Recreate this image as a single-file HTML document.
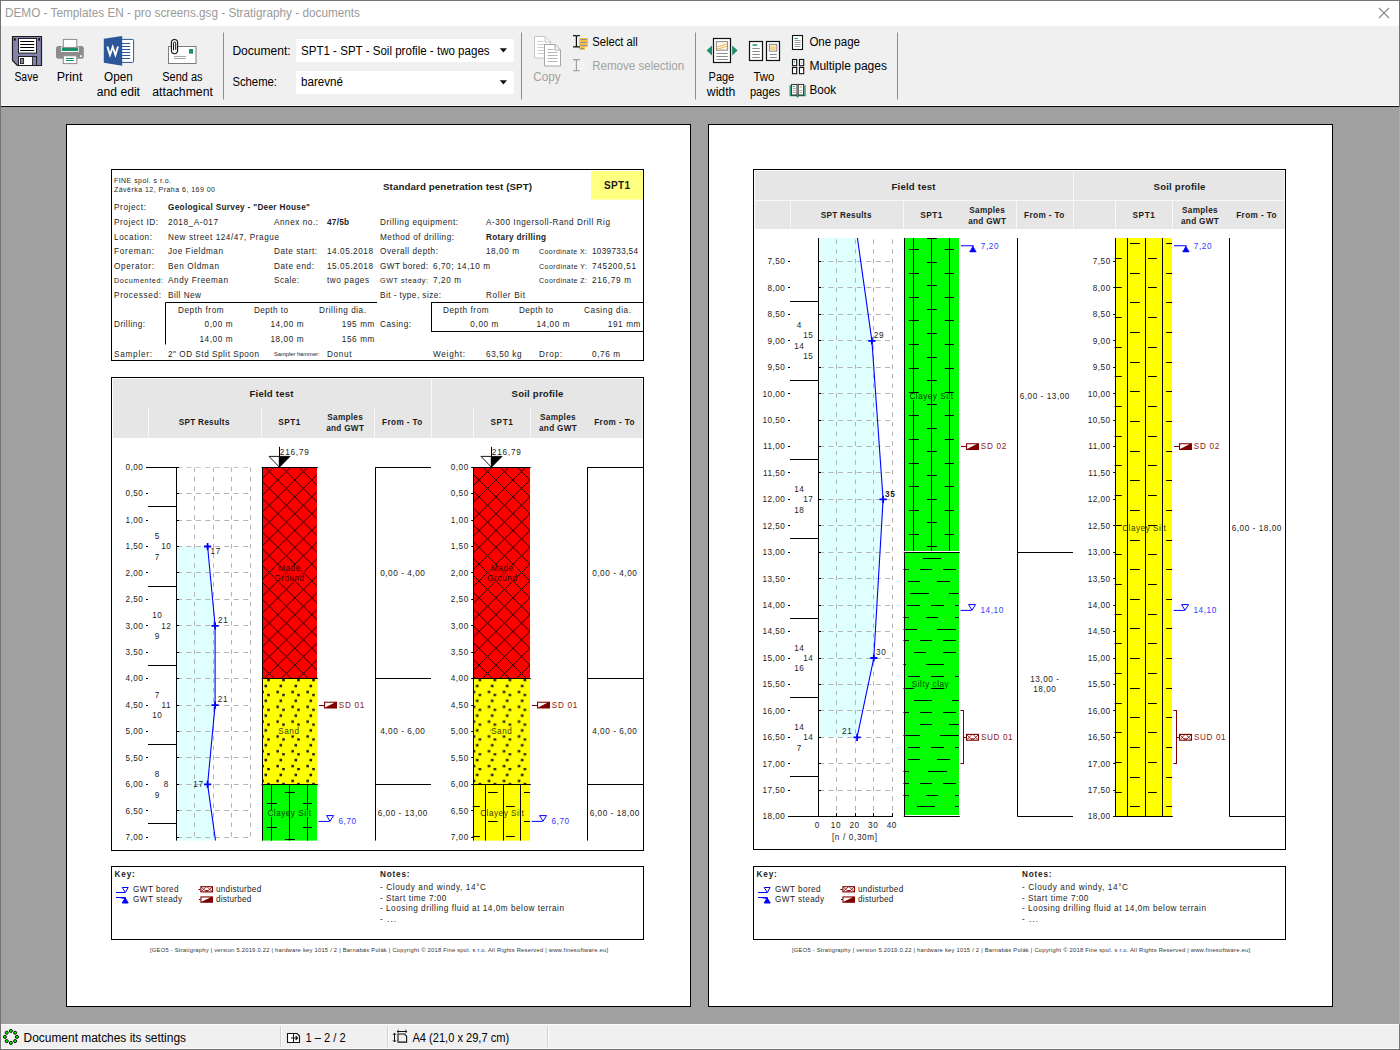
<!DOCTYPE html>
<html lang="en"><head><meta charset="utf-8"><title>DEMO - Templates EN - pro screens.gsg - Stratigraphy - documents</title>
<style>
html,body{margin:0;padding:0;}
body{width:1400px;height:1050px;overflow:hidden;background:#a0a0a0;position:relative;font-family:"Liberation Sans",Arial,sans-serif;}
#win{position:absolute;left:0;top:0;width:1400px;height:1050px;overflow:hidden;}
#titlebar{position:absolute;left:0;top:0;width:1400px;height:26px;background:#fff;}
#toolbar{position:absolute;left:0;top:26px;width:1400px;height:79px;background:#f0f0f0;}
#tbline{position:absolute;left:0;top:105px;width:1400px;height:2px;background:linear-gradient(#fff 0,#fff 1px,#080808 1px,#080808 2px);}
#work{position:absolute;left:0;top:107px;width:1400px;height:917px;background:#a0a0a0;}
#status{position:absolute;left:0;top:1024px;width:1400px;height:26px;background:#f0f0f0;box-shadow:inset 0 1px 0 #fbfbfb, inset 0 -2px 0 #fbfbfb;}
svg{position:absolute;left:0;top:0;display:block;}
svg text{font-family:"Liberation Sans",Arial,sans-serif;}
.frame{position:absolute;pointer-events:none;}

</style></head><body>
<div id="win">
<div id="titlebar"><svg width="1400" height="26" viewBox="0 0 1400 26"><text x="5.0" y="17.2" font-size="12" fill="#9a9a9a" textLength="355" lengthAdjust="spacingAndGlyphs">DEMO - Templates EN - pro screens.gsg - Stratigraphy - documents</text><path d="M1379 8 L1389 18 M1389 8 L1379 18" stroke="#8a8a8a" stroke-width="1.1" fill="none"/></svg></div>
<div id="toolbar"><svg width="1400" height="79" viewBox="0 26 1400 79"><line x1="223.5" y1="32.5" x2="223.5" y2="99.5" stroke="#8c8c8c"/><line x1="521.5" y1="32.5" x2="521.5" y2="99.5" stroke="#8c8c8c"/><line x1="695.5" y1="32.5" x2="695.5" y2="99.5" stroke="#8c8c8c"/><line x1="897.5" y1="32.5" x2="897.5" y2="99.5" stroke="#8c8c8c"/><path d="M12.5 36.5 H41.5 V65.5 H17.5 L12.5 60.5 Z" fill="#8383ad" stroke="#1e1e1e" stroke-width="1.2" stroke-linejoin="round"/><rect x="14.0" y="38.2" width="1.6" height="2.4" fill="#000" stroke="none"/><rect x="38.4" y="38.2" width="1.6" height="2.4" fill="#000" stroke="none"/><rect x="18.5" y="38.5" width="18.0" height="14.6" fill="#fff" stroke="#1e1e1e"/><line x1="20.2" y1="41.5" x2="34.2" y2="41.5" stroke="#000"/><line x1="20.2" y1="44.5" x2="34.2" y2="44.5" stroke="#000"/><line x1="20.2" y1="47.5" x2="34.2" y2="47.5" stroke="#000"/><line x1="20.2" y1="50.5" x2="34.2" y2="50.5" stroke="#000"/><rect x="18.5" y="56.5" width="18.0" height="9.0" fill="#fff" stroke="#1e1e1e"/><rect x="20.4" y="58.4" width="3.2" height="5.2" fill="#8383ad" stroke="#1e1e1e" stroke-width="0.9"/><rect x="32.6" y="56.6" width="4.0" height="9.0" fill="#8383ad" stroke="#1e1e1e" stroke-width="0.9"/><rect x="56" y="46" width="27.8" height="12.8" rx="2.5" fill="#8c8c8c"/><rect x="61.2" y="46.6" width="17.5" height="5.4" fill="#fff" stroke="none"/><rect x="62.0" y="47.4" width="16.0" height="3.6" fill="#1a8f68" stroke="none"/><rect x="63.3" y="39.4" width="13.5" height="8.0" fill="#fff" stroke="#8c8c8c"/><rect x="63.3" y="55.8" width="13.5" height="7.8" fill="#fff" stroke="#8c8c8c"/><line x1="66.0" y1="58.5" x2="73.8" y2="58.5" stroke="#1a8f68"/><line x1="66.0" y1="60.5" x2="73.8" y2="60.5" stroke="#1a8f68"/><rect x="80.1" y="55.2" width="1.8" height="1.8" fill="#fff" stroke="none"/><rect x="120" y="39.4" width="13.6" height="23" rx="1" fill="#fff" stroke="#2b579a" stroke-width="1"/><line x1="122.0" y1="43.5" x2="130.2" y2="43.5" stroke="#2b579a"/><line x1="122.0" y1="46.5" x2="130.2" y2="46.5" stroke="#2b579a"/><line x1="122.0" y1="49.5" x2="130.2" y2="49.5" stroke="#2b579a"/><line x1="122.0" y1="52.5" x2="130.2" y2="52.5" stroke="#2b579a"/><line x1="122.0" y1="55.5" x2="130.2" y2="55.5" stroke="#2b579a"/><line x1="122.0" y1="58.5" x2="130.2" y2="58.5" stroke="#2b579a"/><path d="M103.8 38.8 L122.2 35.9 V65.8 L103.8 62.7 Z" fill="#2b579a"/><path d="M107.4 46.4 L110 55 L112.7 47 L115.4 55 L118 46.4" fill="none" stroke="#fff" stroke-width="1.9" stroke-linejoin="miter"/><rect x="168.5" y="46.5" width="27.5" height="17.0" fill="#fff" stroke="#7d7d7d"/><rect x="189.0" y="49.0" width="4.0" height="4.6" fill="#1a8f68" stroke="none"/><line x1="174.0" y1="56.5" x2="185.8" y2="56.5" stroke="#a8a8a8"/><line x1="174.0" y1="58.5" x2="185.8" y2="58.5" stroke="#a8a8a8"/><path d="M171.4 49.5 V42.6 a3.1 3.1 0 0 1 6.2 0 V50.6 a3.1 3.1 0 0 1 -6.2 0 V49.5" fill="#f4f4f4" stroke="#111" stroke-width="1.1"/><path d="M173.5 50.2 V43.2 a1.1 1.1 0 0 1 2.2 0 V49.8" fill="none" stroke="#111" stroke-width="1"/><text x="26.3" y="80.9" font-size="12" fill="#000" text-anchor="middle" textLength="23.8" lengthAdjust="spacingAndGlyphs">Save</text><text x="69.6" y="80.9" font-size="12" fill="#000" text-anchor="middle" textLength="25.6" lengthAdjust="spacingAndGlyphs">Print</text><text x="118.4" y="80.9" font-size="12" fill="#000" text-anchor="middle" textLength="28.6" lengthAdjust="spacingAndGlyphs">Open</text><text x="118.4" y="96.2" font-size="12" fill="#000" text-anchor="middle" textLength="43.2" lengthAdjust="spacingAndGlyphs">and edit</text><text x="182.4" y="80.9" font-size="12" fill="#000" text-anchor="middle" textLength="40.2" lengthAdjust="spacingAndGlyphs">Send as</text><text x="182.6" y="96.2" font-size="12" fill="#000" text-anchor="middle" textLength="60.6" lengthAdjust="spacingAndGlyphs">attachment</text><text x="232.4" y="54.6" font-size="12" fill="#000" textLength="58.3" lengthAdjust="spacingAndGlyphs">Document:</text><text x="232.4" y="86.2" font-size="12" fill="#000" textLength="44.6" lengthAdjust="spacingAndGlyphs">Scheme:</text><rect x="296.0" y="39.0" width="217.6" height="23.0" fill="#fff" stroke="none"/><rect x="296.0" y="71.0" width="217.6" height="23.0" fill="#fff" stroke="none"/><text x="301.0" y="54.6" font-size="12" fill="#000" textLength="188.6" lengthAdjust="spacingAndGlyphs">SPT1 - SPT - Soil profile - two pages</text><text x="301.0" y="86.2" font-size="12" fill="#000" textLength="42" lengthAdjust="spacingAndGlyphs">barevné</text><path d="M499.8 48.2 H507 L503.4 52.4 Z" fill="#111"/><path d="M499.8 80.2 H507 L503.4 84.4 Z" fill="#111"/><path d="M534.5 36.5 H545.0 L550.5 42.0 V58.0 H534.5 Z" fill="#fff" stroke="#c6c6c6" stroke-width="1"/><path d="M545.0 36.5 V42.0 H550.5" fill="none" stroke="#c6c6c6" stroke-width="1"/><line x1="537.5" y1="41.5" x2="543.5" y2="41.5" stroke="#cfcfcf"/><line x1="537.5" y1="44.5" x2="547.5" y2="44.5" stroke="#cfcfcf"/><line x1="537.5" y1="47.5" x2="547.5" y2="47.5" stroke="#cfcfcf"/><line x1="537.5" y1="50.5" x2="547.5" y2="50.5" stroke="#cfcfcf"/><line x1="537.5" y1="53.5" x2="547.5" y2="53.5" stroke="#cfcfcf"/><path d="M544.5 44.5 H555.0 L560.5 50.0 V66.0 H544.5 Z" fill="#fff" stroke="#a6a6a6" stroke-width="1"/><path d="M555.0 44.5 V50.0 H560.5" fill="none" stroke="#a6a6a6" stroke-width="1"/><line x1="547.5" y1="49.5" x2="553.5" y2="49.5" stroke="#b8b8b8"/><line x1="547.5" y1="52.5" x2="557.5" y2="52.5" stroke="#b8b8b8"/><line x1="547.5" y1="55.5" x2="557.5" y2="55.5" stroke="#b8b8b8"/><line x1="547.5" y1="58.5" x2="557.5" y2="58.5" stroke="#b8b8b8"/><line x1="547.5" y1="61.5" x2="557.5" y2="61.5" stroke="#b8b8b8"/><text x="547.0" y="81.0" font-size="12" fill="#a2a2a2" text-anchor="middle" textLength="27.4" lengthAdjust="spacingAndGlyphs">Copy</text><rect x="579.2" y="38.0" width="8.8" height="8.8" fill="#f6c04b" stroke="none"/><rect x="579.2" y="46.8" width="5.8" height="3.0" fill="#f6c04b" stroke="none"/><line x1="580.4" y1="39.5" x2="586.8" y2="39.5" stroke="#8c8f94"/><line x1="580.4" y1="42.5" x2="586.8" y2="42.5" stroke="#8c8f94"/><line x1="580.4" y1="45.5" x2="586.8" y2="45.5" stroke="#8c8f94"/><line x1="580.4" y1="48.5" x2="584.0" y2="48.5" stroke="#8c8f94"/><path d="M573 35.6 H575.4 Q576.4 35.6 576.4 36.6 Q576.4 35.6 577.4 35.6 H579.8 M576.4 36 V46.4 M573 46.8 H575.4 Q576.4 46.8 576.4 45.8 Q576.4 46.8 577.4 46.8 H579.8" fill="none" stroke="#111" stroke-width="1.2"/><line x1="580.4" y1="62.5" x2="586.8" y2="62.5" stroke="#fafafa"/><line x1="580.4" y1="65.5" x2="586.8" y2="65.5" stroke="#fafafa"/><line x1="580.4" y1="68.5" x2="586.8" y2="68.5" stroke="#fafafa"/><path d="M573 59.6 H575.4 Q576.4 59.6 576.4 60.6 Q576.4 59.6 577.4 59.6 H579.8 M576.4 60 V70.4 M573 70.8 H575.4 Q576.4 70.8 576.4 69.8 Q576.4 70.8 577.4 70.8 H579.8" fill="none" stroke="#9a9a9a" stroke-width="1.1"/><text x="592.2" y="46.0" font-size="12" fill="#000" textLength="45.6" lengthAdjust="spacingAndGlyphs">Select all</text><text x="592.2" y="69.7" font-size="12" fill="#a2a2a2" textLength="92" lengthAdjust="spacingAndGlyphs">Remove selection</text><path d="M706.6 50.4 L712 45.4 V55.4 Z" fill="#1a8f68"/><path d="M737.6 50.4 L732.2 45.4 V55.4 Z" fill="#1a8f68"/><rect x="713.5" y="38.5" width="17.0" height="24.0" fill="#fff" stroke="#111" stroke-width="1.2"/><rect x="716.4" y="41.6" width="11.2" height="8.6" fill="#fdf6e8" stroke="#8a8a8a"/><path d="M717.4 46.6 Q720 46.6 722 45.6 T726.8 44.2 M717.4 48.6 Q720 48.8 722 47.8 T726.8 46.4" fill="none" stroke="#f1b748" stroke-width="1"/><line x1="716.4" y1="53.5" x2="727.8" y2="53.5" stroke="#8a8a8a"/><line x1="716.4" y1="56.5" x2="727.8" y2="56.5" stroke="#8a8a8a"/><line x1="716.4" y1="59.5" x2="727.8" y2="59.5" stroke="#8a8a8a"/><rect x="749.5" y="41.5" width="13.0" height="19.0" fill="#fff" stroke="#111" stroke-width="1.2"/><rect x="766.5" y="41.5" width="13.0" height="19.0" fill="#fff" stroke="#111" stroke-width="1.2"/><rect x="752.4" y="44.2" width="5" height="1.6" rx="0.8" fill="#1a8f68"/><line x1="752.4" y1="48.5" x2="759.8" y2="48.5" stroke="#8a8a8a"/><line x1="752.4" y1="51.5" x2="759.8" y2="51.5" stroke="#8a8a8a"/><line x1="752.4" y1="54.5" x2="759.8" y2="54.5" stroke="#8a8a8a"/><line x1="752.4" y1="57.5" x2="759.8" y2="57.5" stroke="#8a8a8a"/><rect x="769.4" y="44.4" width="7.4" height="6.8" fill="#fdf0d8" stroke="#8a8a8a"/><path d="M770.4 47 H775.8 M770.4 49 H775.8" stroke="#f1b748" stroke-width="1" fill="none"/><line x1="769.6" y1="54.5" x2="776.8" y2="54.5" stroke="#8a8a8a"/><line x1="769.6" y1="57.5" x2="776.8" y2="57.5" stroke="#8a8a8a"/><text x="721.4" y="80.9" font-size="12" fill="#000" text-anchor="middle" textLength="25.6" lengthAdjust="spacingAndGlyphs">Page</text><text x="721.1" y="96.2" font-size="12" fill="#000" text-anchor="middle" textLength="28.6" lengthAdjust="spacingAndGlyphs">width</text><text x="763.9" y="80.9" font-size="12" fill="#000" text-anchor="middle" textLength="21" lengthAdjust="spacingAndGlyphs">Two</text><text x="765.0" y="96.2" font-size="12" fill="#000" text-anchor="middle" textLength="30.2" lengthAdjust="spacingAndGlyphs">pages</text><rect x="792.5" y="35.5" width="10.0" height="14.0" fill="#fff" stroke="#111" stroke-width="1.1"/><line x1="794.6" y1="38.5" x2="797.8" y2="38.5" stroke="#1a8f68"/><line x1="794.6" y1="40.5" x2="800.6" y2="40.5" stroke="#9a9a9a"/><line x1="794.6" y1="42.5" x2="800.6" y2="42.5" stroke="#9a9a9a"/><line x1="794.6" y1="44.5" x2="800.6" y2="44.5" stroke="#9a9a9a"/><line x1="794.6" y1="46.5" x2="800.6" y2="46.5" stroke="#9a9a9a"/><rect x="792.5" y="59.5" width="4.2" height="6.2" fill="#fff" stroke="#111" stroke-width="1.1"/><rect x="799.5" y="59.5" width="4.2" height="6.2" fill="#fff" stroke="#111" stroke-width="1.1"/><rect x="792.5" y="67.5" width="4.2" height="6.2" fill="#fff" stroke="#111" stroke-width="1.1"/><rect x="799.5" y="67.5" width="4.2" height="6.2" fill="#fff" stroke="#111" stroke-width="1.1"/><rect x="793.8" y="61.2" width="1.2" height="1.2" fill="#1a8f68" stroke="none"/><rect x="800.8" y="61.0" width="1.6" height="3.0" fill="#d8d2c4" stroke="none"/><path d="M790.2 85.2 V95.6 H796.4 L797.6 96.8 L798.8 95.6 H805 V85.2" fill="none" stroke="#1a8f68" stroke-width="1.3"/><rect x="791.6" y="84.4" width="5.4" height="10.6" fill="#fff" stroke="#222" stroke-width="0.9"/><rect x="798.2" y="84.4" width="5.4" height="10.6" fill="#fff" stroke="#222" stroke-width="0.9"/><line x1="792.8" y1="86.5" x2="794.6" y2="86.5" stroke="#1a8f68"/><rect x="799.6" y="85.8" width="2.4" height="2.4" fill="#e2c9a0" stroke="none"/><line x1="792.8" y1="88.5" x2="795.8" y2="88.5" stroke="#aaa"/><line x1="792.8" y1="90.5" x2="795.8" y2="90.5" stroke="#aaa"/><line x1="792.8" y1="92.5" x2="795.8" y2="92.5" stroke="#aaa"/><line x1="799.4" y1="90.5" x2="802.4" y2="90.5" stroke="#aaa"/><line x1="799.4" y1="92.5" x2="802.4" y2="92.5" stroke="#aaa"/><text x="809.4" y="45.9" font-size="12" fill="#000" textLength="50.6" lengthAdjust="spacingAndGlyphs">One page</text><text x="809.4" y="69.8" font-size="12" fill="#000" textLength="77.6" lengthAdjust="spacingAndGlyphs">Multiple pages</text><text x="809.4" y="94.0" font-size="12" fill="#000" textLength="26.6" lengthAdjust="spacingAndGlyphs">Book</text></svg></div>
<div id="tbline"></div>
<div id="work"></div>
<svg id="doc" width="1400" height="1050" viewBox="0 0 1400 1050" font-size="8.2" fill="#1c1c1c">
<defs><pattern id="pX" width="17" height="16.83" patternUnits="userSpaceOnUse"><path d="M0 0 L17 16.83 M17 0 L0 16.83" stroke="#000" stroke-width="0.85" fill="none"/><circle cx="0" cy="0" r="0.75"/><circle cx="17" cy="0" r="0.75"/><circle cx="0" cy="16.83" r="0.75"/><circle cx="17" cy="16.83" r="0.75"/><circle cx="8.5" cy="8.41" r="0.75"/></pattern><pattern id="pS" width="15" height="14.83" patternUnits="userSpaceOnUse"><rect x="5.2" y="-0.2" width="2.6" height="2.5"/><rect x="2.5" y="5.7" width="2.6" height="2.5"/><rect x="-0.6" y="11.7" width="2.5" height="2.5"/><rect x="14.4" y="11.7" width="2.5" height="2.5"/></pattern></defs>
<rect x="66.5" y="124.5" width="624.0" height="882.0" fill="#fff" stroke="#000"/><rect x="111.5" y="169.5" width="532.0" height="191.0" fill="none" stroke="#000"/><rect x="591.0" y="171.0" width="52.0" height="28.6" fill="#ffff80" stroke="none"/><text x="114.0" y="183.0" textLength="57" lengthAdjust="spacing" font-size="7">FINE spol. s r.o.</text><text x="114.0" y="192.0" textLength="101" lengthAdjust="spacing" font-size="7">Závěrka 12, Praha 6, 169 00</text><text x="383.0" y="190.0" font-weight="bold" textLength="149" lengthAdjust="spacing" font-size="9.8">Standard penetration test (SPT)</text><text x="604.0" y="189.0" font-weight="bold" textLength="26" lengthAdjust="spacing" font-size="10">SPT1</text><text x="114.0" y="209.7" letter-spacing="0.6">Project:</text><text x="168.0" y="209.7" font-weight="bold" textLength="142" lengthAdjust="spacing">Geological Survey - "Deer House"</text><text x="114.0" y="224.9" textLength="44" lengthAdjust="spacing">Project ID:</text><text x="168.0" y="224.9" textLength="50" lengthAdjust="spacing">2018_A-017</text><text x="274.0" y="224.9" textLength="44" lengthAdjust="spacing">Annex no.:</text><text x="327.0" y="224.9" font-weight="bold" textLength="22" lengthAdjust="spacing">47/5b</text><text x="380.0" y="224.9" textLength="78" lengthAdjust="spacing">Drilling equipment:</text><text x="486.0" y="224.9" textLength="124" lengthAdjust="spacing">A-300 Ingersoll-Rand Drill Rig</text><text x="114.0" y="239.7" textLength="38" lengthAdjust="spacing">Location:</text><text x="168.0" y="239.7" textLength="111" lengthAdjust="spacing">New street 124/47, Prague</text><text x="380.0" y="239.7" textLength="74" lengthAdjust="spacing">Method of drilling:</text><text x="486.0" y="239.7" font-weight="bold" textLength="60" lengthAdjust="spacing">Rotary drilling</text><text x="114.0" y="254.0" textLength="40" lengthAdjust="spacing">Foreman:</text><text x="168.0" y="254.0" textLength="55" lengthAdjust="spacing">Joe Fieldman</text><text x="274.0" y="254.0" textLength="43" lengthAdjust="spacing">Date start:</text><text x="327.0" y="254.0" textLength="46" lengthAdjust="spacing">14.05.2018</text><text x="380.0" y="254.0" textLength="58" lengthAdjust="spacing">Overall depth:</text><text x="486.0" y="254.0" textLength="33" lengthAdjust="spacing">18,00 m</text><text x="539.0" y="254.0" textLength="48" lengthAdjust="spacing" font-size="7">Coordinate X:</text><text x="592.0" y="254.0" textLength="46" lengthAdjust="spacing">1039733,54</text><text x="114.0" y="268.8" textLength="40" lengthAdjust="spacing">Operator:</text><text x="168.0" y="268.8" textLength="51" lengthAdjust="spacing">Ben Oldman</text><text x="274.0" y="268.8" textLength="40" lengthAdjust="spacing">Date end:</text><text x="327.0" y="268.8" textLength="46" lengthAdjust="spacing">15.05.2018</text><text x="380.0" y="268.8" textLength="48" lengthAdjust="spacing">GWT bored:</text><text x="433.0" y="268.8" textLength="57" lengthAdjust="spacing">6,70; 14,10 m</text><text x="539.0" y="268.8" textLength="48" lengthAdjust="spacing" font-size="7">Coordinate Y:</text><text x="592.0" y="268.8" textLength="44" lengthAdjust="spacing">745200,51</text><text x="114.0" y="282.9" textLength="49" lengthAdjust="spacing" font-size="7.2">Documented:</text><text x="168.0" y="282.9" textLength="60" lengthAdjust="spacing">Andy Freeman</text><text x="274.0" y="282.9" textLength="25" lengthAdjust="spacing">Scale:</text><text x="327.0" y="282.9" textLength="42" lengthAdjust="spacing">two pages</text><text x="380.0" y="282.9" textLength="48" lengthAdjust="spacing" font-size="7.2">GWT steady:</text><text x="433.0" y="282.9" textLength="28" lengthAdjust="spacing">7,20 m</text><text x="539.0" y="282.9" textLength="48" lengthAdjust="spacing" font-size="7">Coordinate Z:</text><text x="592.0" y="282.9" textLength="39" lengthAdjust="spacing">216,79 m</text><text x="114.0" y="298.0" textLength="47" lengthAdjust="spacing">Processed:</text><text x="168.0" y="298.0" textLength="33" lengthAdjust="spacing">Bill New</text><text x="380.0" y="298.0" textLength="61" lengthAdjust="spacing">Bit - type, size:</text><text x="486.0" y="298.0" textLength="39" lengthAdjust="spacing">Roller Bit</text><path d="M165.5 344.5 V302.5 H377" fill="none" stroke="#000"/><rect x="431.5" y="302.5" width="212.0" height="29.0" fill="none" stroke="#000"/><text x="178.0" y="312.8" textLength="45.6" lengthAdjust="spacing">Depth from</text><text x="254.0" y="312.8" textLength="34" lengthAdjust="spacing">Depth to</text><text x="319.0" y="312.8" textLength="47" lengthAdjust="spacing">Drilling dia.</text><text x="443.0" y="312.8" textLength="45.6" lengthAdjust="spacing">Depth from</text><text x="519.0" y="312.8" textLength="34" lengthAdjust="spacing">Depth to</text><text x="584.0" y="312.8" textLength="47" lengthAdjust="spacing">Casing dia.</text><text x="114.0" y="327.2" textLength="31" lengthAdjust="spacing">Drilling:</text><text x="233.2" y="327.2" text-anchor="end" letter-spacing="0.6">0,00 m</text><text x="304.2" y="327.2" text-anchor="end" letter-spacing="0.6">14,00 m</text><text x="375.0" y="327.2" text-anchor="end" letter-spacing="0.6">195 mm</text><text x="380.0" y="327.2" textLength="31" lengthAdjust="spacing">Casing:</text><text x="499.0" y="327.2" text-anchor="end" letter-spacing="0.6">0,00 m</text><text x="570.2" y="327.2" text-anchor="end" letter-spacing="0.6">14,00 m</text><text x="641.0" y="327.2" text-anchor="end" letter-spacing="0.6">191 mm</text><text x="233.2" y="341.6" text-anchor="end" letter-spacing="0.6">14,00 m</text><text x="304.2" y="341.6" text-anchor="end" letter-spacing="0.6">18,00 m</text><text x="375.0" y="341.6" text-anchor="end" letter-spacing="0.6">156 mm</text><text x="114.0" y="356.8" textLength="38" lengthAdjust="spacing">Sampler:</text><text x="168.0" y="356.8" textLength="91" lengthAdjust="spacing">2" OD Std Split Spoon</text><text x="274.0" y="356.2" textLength="45.6" lengthAdjust="spacing" font-size="5.8">Sampler hammer:</text><text x="327.0" y="356.8" textLength="24.6" lengthAdjust="spacing">Donut</text><text x="433.0" y="356.8" textLength="32" lengthAdjust="spacing">Weight:</text><text x="486.0" y="356.8" textLength="35.6" lengthAdjust="spacing">63,50 kg</text><text x="539.0" y="356.8" textLength="23" lengthAdjust="spacing">Drop:</text><text x="592.0" y="356.8" textLength="28" lengthAdjust="spacing">0,76 m</text><rect x="111.5" y="377.5" width="532.0" height="473.0" fill="none" stroke="#000"/><rect x="113.0" y="379.0" width="529.5" height="59.0" fill="#e6e6e6" stroke="none"/><line x1="431.5" y1="379.0" x2="431.5" y2="438.0" stroke="#f8f8f8"/><line x1="148.5" y1="408.0" x2="148.5" y2="438.0" stroke="#f8f8f8"/><line x1="261.5" y1="408.0" x2="261.5" y2="438.0" stroke="#f8f8f8"/><line x1="374.5" y1="408.0" x2="374.5" y2="438.0" stroke="#f8f8f8"/><line x1="473.5" y1="408.0" x2="473.5" y2="438.0" stroke="#f8f8f8"/><line x1="530.5" y1="408.0" x2="530.5" y2="438.0" stroke="#f8f8f8"/><text x="271.6" y="396.9" text-anchor="middle" font-weight="bold" letter-spacing="0.2" font-size="9.6">Field test</text><text x="537.6" y="396.9" text-anchor="middle" font-weight="bold" letter-spacing="0.2" font-size="9.6">Soil profile</text><text x="204.2" y="424.9" text-anchor="middle" font-weight="bold" letter-spacing="0.3">SPT Results</text><text x="289.6" y="424.9" text-anchor="middle" font-weight="bold" letter-spacing="0.6">SPT1</text><text x="345.2" y="419.7" text-anchor="middle" font-weight="bold" letter-spacing="0.3">Samples</text><text x="345.2" y="430.5" text-anchor="middle" font-weight="bold" letter-spacing="0.3">and GWT</text><text x="402.4" y="424.9" text-anchor="middle" font-weight="bold" letter-spacing="0.4">From - To</text><text x="502.0" y="424.9" text-anchor="middle" font-weight="bold" letter-spacing="0.6">SPT1</text><text x="558.0" y="419.7" text-anchor="middle" font-weight="bold" letter-spacing="0.3">Samples</text><text x="558.0" y="430.5" text-anchor="middle" font-weight="bold" letter-spacing="0.3">and GWT</text><text x="614.6" y="424.9" text-anchor="middle" font-weight="bold" letter-spacing="0.4">From - To</text><text x="143.4" y="470.0" text-anchor="end" letter-spacing="0.5">0,00</text><line x1="146.0" y1="467.5" x2="148.0" y2="467.5" stroke="#000"/><text x="143.4" y="496.4" text-anchor="end" letter-spacing="0.5">0,50</text><line x1="146.0" y1="493.5" x2="148.0" y2="493.5" stroke="#000"/><text x="143.4" y="522.9" text-anchor="end" letter-spacing="0.5">1,00</text><line x1="146.0" y1="520.5" x2="148.0" y2="520.5" stroke="#000"/><text x="143.4" y="549.3" text-anchor="end" letter-spacing="0.5">1,50</text><line x1="146.0" y1="546.5" x2="148.0" y2="546.5" stroke="#000"/><text x="143.4" y="575.7" text-anchor="end" letter-spacing="0.5">2,00</text><line x1="146.0" y1="572.5" x2="148.0" y2="572.5" stroke="#000"/><text x="143.4" y="602.1" text-anchor="end" letter-spacing="0.5">2,50</text><line x1="146.0" y1="599.5" x2="148.0" y2="599.5" stroke="#000"/><text x="143.4" y="628.6" text-anchor="end" letter-spacing="0.5">3,00</text><line x1="146.0" y1="625.5" x2="148.0" y2="625.5" stroke="#000"/><text x="143.4" y="655.0" text-anchor="end" letter-spacing="0.5">3,50</text><line x1="146.0" y1="652.5" x2="148.0" y2="652.5" stroke="#000"/><text x="143.4" y="681.4" text-anchor="end" letter-spacing="0.5">4,00</text><line x1="146.0" y1="678.5" x2="148.0" y2="678.5" stroke="#000"/><text x="143.4" y="707.9" text-anchor="end" letter-spacing="0.5">4,50</text><line x1="146.0" y1="705.5" x2="148.0" y2="705.5" stroke="#000"/><text x="143.4" y="734.3" text-anchor="end" letter-spacing="0.5">5,00</text><line x1="146.0" y1="731.5" x2="148.0" y2="731.5" stroke="#000"/><text x="143.4" y="760.7" text-anchor="end" letter-spacing="0.5">5,50</text><line x1="146.0" y1="757.5" x2="148.0" y2="757.5" stroke="#000"/><text x="143.4" y="787.2" text-anchor="end" letter-spacing="0.5">6,00</text><line x1="146.0" y1="784.5" x2="148.0" y2="784.5" stroke="#000"/><text x="143.4" y="813.6" text-anchor="end" letter-spacing="0.5">6,50</text><line x1="146.0" y1="810.5" x2="148.0" y2="810.5" stroke="#000"/><text x="143.4" y="840.0" text-anchor="end" letter-spacing="0.5">7,00</text><line x1="146.0" y1="837.5" x2="148.0" y2="837.5" stroke="#000"/><line x1="146.0" y1="467.5" x2="176.0" y2="467.5" stroke="#000"/><clipPath id="clipS1"><rect x="136.0" y="467.2" width="130" height="373.4"/></clipPath><g clip-path="url(#clipS1)"><polygon points="176.0,546.5 207.6,546.5 215.1,625.8 215.1,705.1 207.6,784.4 229.9,942.9 241.1,1101.5 231.8,1260.1 215.1,1339.4 176.0,1339.4" fill="#e0ffff"/><line x1="194.5" y1="467.2" x2="194.5" y2="1418.7" stroke="#b4b4b4" stroke-dasharray="4.6 5"/><line x1="213.5" y1="467.2" x2="213.5" y2="1418.7" stroke="#b4b4b4" stroke-dasharray="4.6 5"/><line x1="231.5" y1="467.2" x2="231.5" y2="1418.7" stroke="#b4b4b4" stroke-dasharray="4.6 5"/><line x1="250.5" y1="467.2" x2="250.5" y2="1418.7" stroke="#b4b4b4" stroke-dasharray="4.6 5"/><line x1="177.0" y1="467.5" x2="250.9" y2="467.5" stroke="#b4b4b4" stroke-dasharray="5 4.45"/><line x1="177.0" y1="493.5" x2="250.9" y2="493.5" stroke="#b4b4b4" stroke-dasharray="5 4.45"/><line x1="177.0" y1="520.5" x2="250.9" y2="520.5" stroke="#b4b4b4" stroke-dasharray="5 4.45"/><line x1="177.0" y1="546.5" x2="250.9" y2="546.5" stroke="#b4b4b4" stroke-dasharray="5 4.45"/><line x1="177.0" y1="572.5" x2="250.9" y2="572.5" stroke="#b4b4b4" stroke-dasharray="5 4.45"/><line x1="177.0" y1="599.5" x2="250.9" y2="599.5" stroke="#b4b4b4" stroke-dasharray="5 4.45"/><line x1="177.0" y1="625.5" x2="250.9" y2="625.5" stroke="#b4b4b4" stroke-dasharray="5 4.45"/><line x1="177.0" y1="652.5" x2="250.9" y2="652.5" stroke="#b4b4b4" stroke-dasharray="5 4.45"/><line x1="177.0" y1="678.5" x2="250.9" y2="678.5" stroke="#b4b4b4" stroke-dasharray="5 4.45"/><line x1="177.0" y1="705.5" x2="250.9" y2="705.5" stroke="#b4b4b4" stroke-dasharray="5 4.45"/><line x1="177.0" y1="731.5" x2="250.9" y2="731.5" stroke="#b4b4b4" stroke-dasharray="5 4.45"/><line x1="177.0" y1="757.5" x2="250.9" y2="757.5" stroke="#b4b4b4" stroke-dasharray="5 4.45"/><line x1="177.0" y1="784.5" x2="250.9" y2="784.5" stroke="#b4b4b4" stroke-dasharray="5 4.45"/><line x1="177.0" y1="810.5" x2="250.9" y2="810.5" stroke="#b4b4b4" stroke-dasharray="5 4.45"/><line x1="177.0" y1="837.5" x2="250.9" y2="837.5" stroke="#b4b4b4" stroke-dasharray="5 4.45"/><polyline points="207.6,546.5 215.1,625.8 215.1,705.1 207.6,784.4 229.9,942.9 241.1,1101.5 231.8,1260.1 215.1,1339.4" fill="none" stroke="#0000ff" stroke-width="1.1"/></g><line x1="176.0" y1="467.5" x2="179.0" y2="467.5" stroke="#000"/><line x1="176.0" y1="493.5" x2="179.0" y2="493.5" stroke="#000"/><line x1="176.0" y1="520.5" x2="179.0" y2="520.5" stroke="#000"/><line x1="176.0" y1="546.5" x2="179.0" y2="546.5" stroke="#000"/><line x1="176.0" y1="572.5" x2="179.0" y2="572.5" stroke="#000"/><line x1="176.0" y1="599.5" x2="179.0" y2="599.5" stroke="#000"/><line x1="176.0" y1="625.5" x2="179.0" y2="625.5" stroke="#000"/><line x1="176.0" y1="652.5" x2="179.0" y2="652.5" stroke="#000"/><line x1="176.0" y1="678.5" x2="179.0" y2="678.5" stroke="#000"/><line x1="176.0" y1="705.5" x2="179.0" y2="705.5" stroke="#000"/><line x1="176.0" y1="731.5" x2="179.0" y2="731.5" stroke="#000"/><line x1="176.0" y1="757.5" x2="179.0" y2="757.5" stroke="#000"/><line x1="176.0" y1="784.5" x2="179.0" y2="784.5" stroke="#000"/><line x1="176.0" y1="810.5" x2="179.0" y2="810.5" stroke="#000"/><line x1="176.0" y1="837.5" x2="179.0" y2="837.5" stroke="#000"/><line x1="176.5" y1="467.2" x2="176.5" y2="840.6" stroke="#000"/><line x1="148.0" y1="506.5" x2="176.0" y2="506.5" stroke="#000"/><line x1="148.0" y1="586.5" x2="176.0" y2="586.5" stroke="#000"/><line x1="148.0" y1="665.5" x2="176.0" y2="665.5" stroke="#000"/><line x1="148.0" y1="744.5" x2="176.0" y2="744.5" stroke="#000"/><line x1="148.0" y1="823.5" x2="176.0" y2="823.5" stroke="#000"/><path d="M204.0 546.5 H211.2 M207.6 542.9 V550.1" stroke="#0000ff" stroke-width="1.8" fill="none"/><text x="210.4" y="553.6" letter-spacing="0.7">17</text><text x="157.3" y="539.1" text-anchor="middle" letter-spacing="0.5">5</text><text x="166.3" y="549.3" text-anchor="middle" letter-spacing="0.5">10</text><text x="157.3" y="559.7" text-anchor="middle" letter-spacing="0.5">7</text><path d="M211.5 625.8 H218.7 M215.1 622.2 V629.4" stroke="#0000ff" stroke-width="1.8" fill="none"/><text x="217.9" y="622.8" letter-spacing="0.7">21</text><text x="157.3" y="618.4" text-anchor="middle" letter-spacing="0.5">10</text><text x="166.3" y="628.6" text-anchor="middle" letter-spacing="0.5">12</text><text x="157.3" y="639.0" text-anchor="middle" letter-spacing="0.5">9</text><path d="M211.5 705.1 H218.7 M215.1 701.5 V708.7" stroke="#0000ff" stroke-width="1.8" fill="none"/><text x="217.8" y="701.7" letter-spacing="0.7">21</text><text x="157.3" y="697.7" text-anchor="middle" letter-spacing="0.5">7</text><text x="166.3" y="707.9" text-anchor="middle" letter-spacing="0.5">11</text><text x="157.3" y="718.3" text-anchor="middle" letter-spacing="0.5">10</text><path d="M204.0 784.4 H211.2 M207.6 780.8 V788.0" stroke="#0000ff" stroke-width="1.8" fill="none"/><text x="203.8" y="787.3" text-anchor="end" letter-spacing="0.7">17</text><text x="157.3" y="777.0" text-anchor="middle" letter-spacing="0.5">8</text><text x="166.3" y="787.2" text-anchor="middle" letter-spacing="0.5">8</text><text x="157.3" y="797.6" text-anchor="middle" letter-spacing="0.5">9</text><rect x="262.0" y="467.2" width="55.0" height="211.4" fill="#ff0000" stroke="none"/><g transform="translate(260.80 463.17)"><rect x="1.20" y="4.03" width="55.00" height="211.44" fill="url(#pX)"/></g><rect x="262.0" y="678.6" width="55.0" height="105.7" fill="#ffff00" stroke="none"/><g transform="translate(262.00 679.00)"><rect x="0.00" y="-0.36" width="55.00" height="105.72" fill="url(#pS)"/></g><rect x="262.0" y="784.4" width="55.0" height="56.2" fill="#00ff00" stroke="none"/><clipPath id="cp1"><rect x="262.0" y="784.4" width="55.0" height="56.2"/></clipPath><g clip-path="url(#cp1)"><line x1="271.5" y1="782.4" x2="271.5" y2="842.6" stroke="#000"/><line x1="289.5" y1="782.4" x2="289.5" y2="842.6" stroke="#000"/><line x1="307.5" y1="782.4" x2="307.5" y2="842.6" stroke="#000"/><line x1="284.8" y1="745.5" x2="294.8" y2="745.5" stroke="#000"/><line x1="266.8" y1="756.5" x2="276.8" y2="756.5" stroke="#000"/><line x1="302.8" y1="756.5" x2="311.8" y2="756.5" stroke="#000"/><line x1="284.8" y1="768.5" x2="294.8" y2="768.5" stroke="#000"/><line x1="266.8" y1="780.5" x2="276.8" y2="780.5" stroke="#000"/><line x1="302.8" y1="780.5" x2="311.8" y2="780.5" stroke="#000"/><line x1="284.8" y1="792.5" x2="294.8" y2="792.5" stroke="#000"/><line x1="266.8" y1="803.5" x2="276.8" y2="803.5" stroke="#000"/><line x1="302.8" y1="803.5" x2="311.8" y2="803.5" stroke="#000"/><line x1="284.8" y1="816.5" x2="294.8" y2="816.5" stroke="#000"/><line x1="266.8" y1="827.5" x2="276.8" y2="827.5" stroke="#000"/><line x1="302.8" y1="827.5" x2="311.8" y2="827.5" stroke="#000"/><line x1="284.8" y1="839.5" x2="294.8" y2="839.5" stroke="#000"/><line x1="266.8" y1="851.5" x2="276.8" y2="851.5" stroke="#000"/><line x1="302.8" y1="851.5" x2="311.8" y2="851.5" stroke="#000"/><line x1="284.8" y1="863.5" x2="294.8" y2="863.5" stroke="#000"/><line x1="266.8" y1="874.5" x2="276.8" y2="874.5" stroke="#000"/><line x1="302.8" y1="874.5" x2="311.8" y2="874.5" stroke="#000"/></g><line x1="262.5" y1="467.2" x2="262.5" y2="840.6" stroke="#000"/><line x1="261.6" y1="467.5" x2="317.8" y2="467.5" stroke="#000"/><line x1="261.6" y1="678.5" x2="317.8" y2="678.5" stroke="#000"/><line x1="261.6" y1="784.5" x2="317.8" y2="784.5" stroke="#000"/><path d="M269.0 456.4 H279.4 V467.2 Z" fill="#fff" stroke="#000" stroke-width="0.9"/><path d="M279.4 456.4 H290.0 L279.4 467.2 Z" fill="#000" stroke="#000" stroke-width="0.9"/><line x1="279.5" y1="446.8" x2="279.5" y2="467.2" stroke="#000"/><text x="279.8" y="455.0" letter-spacing="0.8">216,79</text><rect x="274.5" y="565.2" width="30.0" height="16.9" fill="#ff0000" fill-opacity="0.55"/><text x="289.5" y="570.8" text-anchor="middle" fill="rgba(0,0,0,0.82)" letter-spacing="0.5">Made</text><text x="289.5" y="580.7" text-anchor="middle" fill="rgba(0,0,0,0.82)" letter-spacing="0.5">Ground</text><rect x="278.4" y="728.2" width="21.0" height="7.0" fill="#ffff00" fill-opacity="1.0"/><text x="288.9" y="733.8" text-anchor="middle" fill="rgba(0,0,0,0.82)" letter-spacing="0.5">Sand</text><rect x="266.5" y="810.0" width="46.0" height="7.0" fill="#00ff00" fill-opacity="1.0"/><line x1="289.5" y1="805.0" x2="289.5" y2="820.0" stroke="#000"/><text x="289.5" y="815.6" text-anchor="middle" fill="rgba(0,0,0,0.82)" letter-spacing="0.5">Clayey Silt</text><line x1="319.0" y1="705.5" x2="324.0" y2="705.5" stroke="#800000"/><rect x="324.0" y="701.7" width="13.0" height="6.8" fill="#800000" stroke="none"/><path d="M325.1 702.8 H334.4 L325.1 707.4 Z" fill="#fff"/><text x="338.8" y="707.9" fill="#8a2020" letter-spacing="0.7">SD 01</text><path d="M318.6 821.4 H329.6 M326.6 815.6 H333.6 L330.0 821.2 Z" fill="none" stroke="#0000ff" stroke-width="1"/><text x="338.4" y="824.0" fill="#3838ff" letter-spacing="0.6">6,70</text><line x1="375.5" y1="467.2" x2="375.5" y2="840.6" stroke="#000"/><line x1="375.5" y1="467.5" x2="431.0" y2="467.5" stroke="#000"/><line x1="375.5" y1="678.5" x2="431.0" y2="678.5" stroke="#000"/><line x1="375.5" y1="784.5" x2="431.0" y2="784.5" stroke="#000"/><text x="402.8" y="575.7" text-anchor="middle" letter-spacing="0.55">0,00 - 4,00</text><text x="402.8" y="734.3" text-anchor="middle" letter-spacing="0.55">4,00 - 6,00</text><text x="402.8" y="815.8" text-anchor="middle" letter-spacing="0.55">6,00 - 13,00</text><text x="468.7" y="470.0" text-anchor="end" letter-spacing="0.5">0,00</text><line x1="471.2" y1="467.5" x2="473.4" y2="467.5" stroke="#000"/><text x="468.7" y="496.4" text-anchor="end" letter-spacing="0.5">0,50</text><line x1="471.2" y1="493.5" x2="473.4" y2="493.5" stroke="#000"/><text x="468.7" y="522.9" text-anchor="end" letter-spacing="0.5">1,00</text><line x1="471.2" y1="520.5" x2="473.4" y2="520.5" stroke="#000"/><text x="468.7" y="549.3" text-anchor="end" letter-spacing="0.5">1,50</text><line x1="471.2" y1="546.5" x2="473.4" y2="546.5" stroke="#000"/><text x="468.7" y="575.7" text-anchor="end" letter-spacing="0.5">2,00</text><line x1="471.2" y1="572.5" x2="473.4" y2="572.5" stroke="#000"/><text x="468.7" y="602.1" text-anchor="end" letter-spacing="0.5">2,50</text><line x1="471.2" y1="599.5" x2="473.4" y2="599.5" stroke="#000"/><text x="468.7" y="628.6" text-anchor="end" letter-spacing="0.5">3,00</text><line x1="471.2" y1="625.5" x2="473.4" y2="625.5" stroke="#000"/><text x="468.7" y="655.0" text-anchor="end" letter-spacing="0.5">3,50</text><line x1="471.2" y1="652.5" x2="473.4" y2="652.5" stroke="#000"/><text x="468.7" y="681.4" text-anchor="end" letter-spacing="0.5">4,00</text><line x1="471.2" y1="678.5" x2="473.4" y2="678.5" stroke="#000"/><text x="468.7" y="707.9" text-anchor="end" letter-spacing="0.5">4,50</text><line x1="471.2" y1="705.5" x2="473.4" y2="705.5" stroke="#000"/><text x="468.7" y="734.3" text-anchor="end" letter-spacing="0.5">5,00</text><line x1="471.2" y1="731.5" x2="473.4" y2="731.5" stroke="#000"/><text x="468.7" y="760.7" text-anchor="end" letter-spacing="0.5">5,50</text><line x1="471.2" y1="757.5" x2="473.4" y2="757.5" stroke="#000"/><text x="468.7" y="787.2" text-anchor="end" letter-spacing="0.5">6,00</text><line x1="471.2" y1="784.5" x2="473.4" y2="784.5" stroke="#000"/><text x="468.7" y="813.6" text-anchor="end" letter-spacing="0.5">6,50</text><line x1="471.2" y1="810.5" x2="473.4" y2="810.5" stroke="#000"/><text x="468.7" y="840.0" text-anchor="end" letter-spacing="0.5">7,00</text><line x1="471.2" y1="837.5" x2="473.4" y2="837.5" stroke="#000"/><rect x="473.4" y="467.2" width="56.6" height="211.4" fill="#ff0000" stroke="none"/><g transform="translate(462.00 463.17)"><rect x="11.40" y="4.03" width="56.60" height="211.44" fill="url(#pX)"/></g><rect x="473.4" y="678.6" width="56.6" height="105.7" fill="#ffff00" stroke="none"/><g transform="translate(473.40 679.00)"><rect x="0.00" y="-0.36" width="56.60" height="105.72" fill="url(#pS)"/></g><rect x="473.4" y="784.4" width="56.6" height="56.2" fill="#ffff00" stroke="none"/><clipPath id="cp2"><rect x="472.4" y="784.4" width="57.6" height="56.2"/></clipPath><g clip-path="url(#cp2)"><line x1="485.5" y1="782.4" x2="485.5" y2="842.6" stroke="#000"/><line x1="503.5" y1="782.4" x2="503.5" y2="842.6" stroke="#000"/><line x1="520.5" y1="782.4" x2="520.5" y2="842.6" stroke="#000"/><line x1="488.0" y1="732.5" x2="497.8" y2="732.5" stroke="#000"/><line x1="524.0" y1="732.5" x2="531.0" y2="732.5" stroke="#000"/><line x1="472.4" y1="747.5" x2="479.8" y2="747.5" stroke="#000"/><line x1="506.0" y1="747.5" x2="514.8" y2="747.5" stroke="#000"/><line x1="488.0" y1="762.5" x2="497.8" y2="762.5" stroke="#000"/><line x1="524.0" y1="762.5" x2="531.0" y2="762.5" stroke="#000"/><line x1="472.4" y1="777.5" x2="479.8" y2="777.5" stroke="#000"/><line x1="506.0" y1="777.5" x2="514.8" y2="777.5" stroke="#000"/><line x1="488.0" y1="792.5" x2="497.8" y2="792.5" stroke="#000"/><line x1="524.0" y1="792.5" x2="531.0" y2="792.5" stroke="#000"/><line x1="472.4" y1="806.5" x2="479.8" y2="806.5" stroke="#000"/><line x1="506.0" y1="806.5" x2="514.8" y2="806.5" stroke="#000"/><line x1="488.0" y1="821.5" x2="497.8" y2="821.5" stroke="#000"/><line x1="524.0" y1="821.5" x2="531.0" y2="821.5" stroke="#000"/><line x1="472.4" y1="836.5" x2="479.8" y2="836.5" stroke="#000"/><line x1="506.0" y1="836.5" x2="514.8" y2="836.5" stroke="#000"/><line x1="488.0" y1="851.5" x2="497.8" y2="851.5" stroke="#000"/><line x1="524.0" y1="851.5" x2="531.0" y2="851.5" stroke="#000"/><line x1="472.4" y1="866.5" x2="479.8" y2="866.5" stroke="#000"/><line x1="506.0" y1="866.5" x2="514.8" y2="866.5" stroke="#000"/></g><line x1="473.5" y1="467.2" x2="473.5" y2="840.6" stroke="#000"/><line x1="473.0" y1="467.5" x2="530.8" y2="467.5" stroke="#000"/><line x1="473.0" y1="678.5" x2="530.8" y2="678.5" stroke="#000"/><line x1="473.0" y1="784.5" x2="530.8" y2="784.5" stroke="#000"/><path d="M481.0 456.4 H491.4 V467.2 Z" fill="#fff" stroke="#000" stroke-width="0.9"/><path d="M491.4 456.4 H502.0 L491.4 467.2 Z" fill="#000" stroke="#000" stroke-width="0.9"/><line x1="491.5" y1="446.8" x2="491.5" y2="467.2" stroke="#000"/><text x="491.8" y="455.0" letter-spacing="0.8">216,79</text><rect x="487.3" y="565.2" width="30.0" height="16.9" fill="#ff0000" fill-opacity="0.55"/><text x="502.3" y="570.8" text-anchor="middle" fill="rgba(0,0,0,0.82)" letter-spacing="0.5">Made</text><text x="502.3" y="580.7" text-anchor="middle" fill="rgba(0,0,0,0.82)" letter-spacing="0.5">Ground</text><rect x="491.2" y="728.2" width="21.0" height="7.0" fill="#ffff00" fill-opacity="1.0"/><text x="501.7" y="733.8" text-anchor="middle" fill="rgba(0,0,0,0.82)" letter-spacing="0.5">Sand</text><rect x="479.3" y="810.0" width="46.0" height="7.0" fill="#ffff00" fill-opacity="0.0"/><text x="502.3" y="815.6" text-anchor="middle" fill="rgba(0,0,0,0.82)" letter-spacing="0.5">Clayey Silt</text><line x1="532.0" y1="705.5" x2="537.0" y2="705.5" stroke="#800000"/><rect x="537.0" y="701.7" width="13.0" height="6.8" fill="#800000" stroke="none"/><path d="M538.1 702.8 H547.4 L538.1 707.4 Z" fill="#fff"/><text x="551.8" y="707.9" fill="#8a2020" letter-spacing="0.7">SD 01</text><path d="M531.6 821.4 H542.6 M539.6 815.6 H546.6 L543.0 821.2 Z" fill="none" stroke="#0000ff" stroke-width="1"/><text x="551.4" y="824.0" fill="#3838ff" letter-spacing="0.6">6,70</text><line x1="587.5" y1="467.2" x2="587.5" y2="840.6" stroke="#000"/><line x1="587.5" y1="467.5" x2="643.0" y2="467.5" stroke="#000"/><line x1="587.5" y1="678.5" x2="643.0" y2="678.5" stroke="#000"/><line x1="587.5" y1="784.5" x2="643.0" y2="784.5" stroke="#000"/><text x="614.8" y="575.7" text-anchor="middle" letter-spacing="0.55">0,00 - 4,00</text><text x="614.8" y="734.3" text-anchor="middle" letter-spacing="0.55">4,00 - 6,00</text><text x="614.8" y="815.8" text-anchor="middle" letter-spacing="0.55">6,00 - 18,00</text><rect x="111.5" y="866.5" width="532.0" height="73.0" fill="none" stroke="#000"/><text x="114.6" y="876.7" font-weight="bold" letter-spacing="0.8">Key:</text><path d="M116.0 892.5 H125.5 M122.2 887.5 H128.2 L125.4 892.4 Z" fill="none" stroke="#0000ff" stroke-width="1"/><path d="M116.0 897.5 H125.4 V899 M122.2 903 L125.2 898 L128.2 903 Z" fill="#0000ff" stroke="#0000ff" stroke-width="1"/><text x="133.0" y="892.0" textLength="45.6" lengthAdjust="spacing">GWT bored</text><text x="133.0" y="902.0" textLength="49.2" lengthAdjust="spacing">GWT steady</text><rect x="200.9" y="886.7" width="11.6" height="5.2" fill="#fff" stroke="#800000" stroke-width="1.1"/><path d="M201.4 887.2 L206.0 891.4 M201.4 891.4 L206.0 887.2 M212.0 887.2 L207.4 891.4 M212.0 891.4 L207.4 887.2" fill="none" stroke="#800000" stroke-width="0.8"/><rect x="205.4" y="890.1" width="2.6" height="1.2" fill="#800000" stroke="none"/><line x1="198.4" y1="889.5" x2="200.4" y2="889.5" stroke="#800000"/><rect x="200.4" y="896.4" width="12.6" height="6.4" fill="#800000" stroke="none"/><path d="M201.5 897.5 H210.4 L201.5 901.7 Z" fill="#fff"/><line x1="199.0" y1="899.5" x2="200.4" y2="899.5" stroke="#800000"/><text x="216.0" y="892.0" textLength="45.2" lengthAdjust="spacing">undisturbed</text><text x="216.0" y="902.0" textLength="35.2" lengthAdjust="spacing">disturbed</text><text x="380.0" y="876.7" font-weight="bold" letter-spacing="0.8">Notes:</text><text x="380.0" y="890.0" textLength="106" lengthAdjust="spacing">- Cloudy and windy, 14°C</text><text x="380.0" y="900.8" textLength="66.4" lengthAdjust="spacing">- Start time 7:00</text><text x="380.0" y="911.0" textLength="184" lengthAdjust="spacing">- Loosing drilling fluid at 14,0m below terrain</text><text x="380.0" y="921.6" textLength="16" lengthAdjust="spacing">- ...</text><text x="379.0" y="952.0" text-anchor="middle" fill="#333" textLength="458" lengthAdjust="spacing" font-size="5.8">[GEO5 - Stratigraphy | version 5.2019.0.22 | hardware key 1015 / 2 | Barnabás Polák | Copyright © 2018 Fine spol. s r.o. All Rights Reserved | www.finesoftware.eu]</text><rect x="708.5" y="124.5" width="624.0" height="882.0" fill="#fff" stroke="#000"/><rect x="753.5" y="169.5" width="532.0" height="680.0" fill="none" stroke="#000"/><rect x="755.0" y="171.0" width="529.5" height="58.0" fill="#e6e6e6" stroke="none"/><line x1="1073.5" y1="171.0" x2="1073.5" y2="229.0" stroke="#f8f8f8"/><line x1="790.5" y1="200.0" x2="790.5" y2="229.0" stroke="#f8f8f8"/><line x1="903.5" y1="200.0" x2="903.5" y2="229.0" stroke="#f8f8f8"/><line x1="1016.5" y1="200.0" x2="1016.5" y2="229.0" stroke="#f8f8f8"/><line x1="1115.5" y1="200.0" x2="1115.5" y2="229.0" stroke="#f8f8f8"/><line x1="1172.5" y1="200.0" x2="1172.5" y2="229.0" stroke="#f8f8f8"/><line x1="755.0" y1="200.5" x2="1284.5" y2="200.5" stroke="#f8f8f8"/><text x="913.6" y="189.9" text-anchor="middle" font-weight="bold" letter-spacing="0.2" font-size="9.6">Field test</text><text x="1179.6" y="189.9" text-anchor="middle" font-weight="bold" letter-spacing="0.2" font-size="9.6">Soil profile</text><text x="846.2" y="217.9" text-anchor="middle" font-weight="bold" letter-spacing="0.3">SPT Results</text><text x="931.6" y="217.9" text-anchor="middle" font-weight="bold" letter-spacing="0.6">SPT1</text><text x="987.2" y="212.7" text-anchor="middle" font-weight="bold" letter-spacing="0.3">Samples</text><text x="987.2" y="223.5" text-anchor="middle" font-weight="bold" letter-spacing="0.3">and GWT</text><text x="1044.4" y="217.9" text-anchor="middle" font-weight="bold" letter-spacing="0.4">From - To</text><text x="1144.0" y="217.9" text-anchor="middle" font-weight="bold" letter-spacing="0.6">SPT1</text><text x="1200.0" y="212.7" text-anchor="middle" font-weight="bold" letter-spacing="0.3">Samples</text><text x="1200.0" y="223.5" text-anchor="middle" font-weight="bold" letter-spacing="0.3">and GWT</text><text x="1256.6" y="217.9" text-anchor="middle" font-weight="bold" letter-spacing="0.4">From - To</text><text x="785.4" y="264.3" text-anchor="end" letter-spacing="0.5">7,50</text><line x1="788.0" y1="261.5" x2="790.0" y2="261.5" stroke="#000"/><text x="785.4" y="290.8" text-anchor="end" letter-spacing="0.5">8,00</text><line x1="788.0" y1="287.5" x2="790.0" y2="287.5" stroke="#000"/><text x="785.4" y="317.2" text-anchor="end" letter-spacing="0.5">8,50</text><line x1="788.0" y1="314.5" x2="790.0" y2="314.5" stroke="#000"/><text x="785.4" y="343.6" text-anchor="end" letter-spacing="0.5">9,00</text><line x1="788.0" y1="340.5" x2="790.0" y2="340.5" stroke="#000"/><text x="785.4" y="370.1" text-anchor="end" letter-spacing="0.5">9,50</text><line x1="788.0" y1="367.5" x2="790.0" y2="367.5" stroke="#000"/><text x="785.4" y="396.5" text-anchor="end" letter-spacing="0.5">10,00</text><line x1="788.0" y1="393.5" x2="790.0" y2="393.5" stroke="#000"/><text x="785.4" y="422.9" text-anchor="end" letter-spacing="0.5">10,50</text><line x1="788.0" y1="420.5" x2="790.0" y2="420.5" stroke="#000"/><text x="785.4" y="449.4" text-anchor="end" letter-spacing="0.5">11,00</text><line x1="788.0" y1="446.5" x2="790.0" y2="446.5" stroke="#000"/><text x="785.4" y="475.8" text-anchor="end" letter-spacing="0.5">11,50</text><line x1="788.0" y1="472.5" x2="790.0" y2="472.5" stroke="#000"/><text x="785.4" y="502.2" text-anchor="end" letter-spacing="0.5">12,00</text><line x1="788.0" y1="499.5" x2="790.0" y2="499.5" stroke="#000"/><text x="785.4" y="528.6" text-anchor="end" letter-spacing="0.5">12,50</text><line x1="788.0" y1="525.5" x2="790.0" y2="525.5" stroke="#000"/><text x="785.4" y="555.1" text-anchor="end" letter-spacing="0.5">13,00</text><line x1="788.0" y1="552.5" x2="790.0" y2="552.5" stroke="#000"/><text x="785.4" y="581.5" text-anchor="end" letter-spacing="0.5">13,50</text><line x1="788.0" y1="578.5" x2="790.0" y2="578.5" stroke="#000"/><text x="785.4" y="607.9" text-anchor="end" letter-spacing="0.5">14,00</text><line x1="788.0" y1="605.5" x2="790.0" y2="605.5" stroke="#000"/><text x="785.4" y="634.4" text-anchor="end" letter-spacing="0.5">14,50</text><line x1="788.0" y1="631.5" x2="790.0" y2="631.5" stroke="#000"/><text x="785.4" y="660.8" text-anchor="end" letter-spacing="0.5">15,00</text><line x1="788.0" y1="658.5" x2="790.0" y2="658.5" stroke="#000"/><text x="785.4" y="687.2" text-anchor="end" letter-spacing="0.5">15,50</text><line x1="788.0" y1="684.5" x2="790.0" y2="684.5" stroke="#000"/><text x="785.4" y="713.7" text-anchor="end" letter-spacing="0.5">16,00</text><line x1="788.0" y1="710.5" x2="790.0" y2="710.5" stroke="#000"/><text x="785.4" y="740.1" text-anchor="end" letter-spacing="0.5">16,50</text><line x1="788.0" y1="737.5" x2="790.0" y2="737.5" stroke="#000"/><text x="785.4" y="766.5" text-anchor="end" letter-spacing="0.5">17,00</text><line x1="788.0" y1="763.5" x2="790.0" y2="763.5" stroke="#000"/><text x="785.4" y="792.9" text-anchor="end" letter-spacing="0.5">17,50</text><line x1="788.0" y1="790.5" x2="790.0" y2="790.5" stroke="#000"/><text x="785.4" y="819.4" text-anchor="end" letter-spacing="0.5">18,00</text><line x1="788.0" y1="816.5" x2="790.0" y2="816.5" stroke="#000"/><clipPath id="clipS2"><rect x="778.0" y="238.0" width="130" height="578.6"/></clipPath><g clip-path="url(#clipS2)"><polygon points="818.0,-55.6 849.6,-55.6 857.1,23.7 857.1,103.0 849.6,182.3 871.9,340.8 883.1,499.4 873.8,658.0 857.1,737.3 818.0,737.3" fill="#e0ffff"/><line x1="836.5" y1="-134.9" x2="836.5" y2="816.6" stroke="#b4b4b4" stroke-dasharray="4.6 5"/><line x1="855.5" y1="-134.9" x2="855.5" y2="816.6" stroke="#b4b4b4" stroke-dasharray="4.6 5"/><line x1="873.5" y1="-134.9" x2="873.5" y2="816.6" stroke="#b4b4b4" stroke-dasharray="4.6 5"/><line x1="892.5" y1="-134.9" x2="892.5" y2="816.6" stroke="#b4b4b4" stroke-dasharray="4.6 5"/><line x1="819.0" y1="261.5" x2="892.9" y2="261.5" stroke="#b4b4b4" stroke-dasharray="5 4.45"/><line x1="819.0" y1="287.5" x2="892.9" y2="287.5" stroke="#b4b4b4" stroke-dasharray="5 4.45"/><line x1="819.0" y1="314.5" x2="892.9" y2="314.5" stroke="#b4b4b4" stroke-dasharray="5 4.45"/><line x1="819.0" y1="340.5" x2="892.9" y2="340.5" stroke="#b4b4b4" stroke-dasharray="5 4.45"/><line x1="819.0" y1="367.5" x2="892.9" y2="367.5" stroke="#b4b4b4" stroke-dasharray="5 4.45"/><line x1="819.0" y1="393.5" x2="892.9" y2="393.5" stroke="#b4b4b4" stroke-dasharray="5 4.45"/><line x1="819.0" y1="420.5" x2="892.9" y2="420.5" stroke="#b4b4b4" stroke-dasharray="5 4.45"/><line x1="819.0" y1="446.5" x2="892.9" y2="446.5" stroke="#b4b4b4" stroke-dasharray="5 4.45"/><line x1="819.0" y1="472.5" x2="892.9" y2="472.5" stroke="#b4b4b4" stroke-dasharray="5 4.45"/><line x1="819.0" y1="499.5" x2="892.9" y2="499.5" stroke="#b4b4b4" stroke-dasharray="5 4.45"/><line x1="819.0" y1="525.5" x2="892.9" y2="525.5" stroke="#b4b4b4" stroke-dasharray="5 4.45"/><line x1="819.0" y1="552.5" x2="892.9" y2="552.5" stroke="#b4b4b4" stroke-dasharray="5 4.45"/><line x1="819.0" y1="578.5" x2="892.9" y2="578.5" stroke="#b4b4b4" stroke-dasharray="5 4.45"/><line x1="819.0" y1="605.5" x2="892.9" y2="605.5" stroke="#b4b4b4" stroke-dasharray="5 4.45"/><line x1="819.0" y1="631.5" x2="892.9" y2="631.5" stroke="#b4b4b4" stroke-dasharray="5 4.45"/><line x1="819.0" y1="658.5" x2="892.9" y2="658.5" stroke="#b4b4b4" stroke-dasharray="5 4.45"/><line x1="819.0" y1="684.5" x2="892.9" y2="684.5" stroke="#b4b4b4" stroke-dasharray="5 4.45"/><line x1="819.0" y1="710.5" x2="892.9" y2="710.5" stroke="#b4b4b4" stroke-dasharray="5 4.45"/><line x1="819.0" y1="737.5" x2="892.9" y2="737.5" stroke="#b4b4b4" stroke-dasharray="5 4.45"/><line x1="819.0" y1="763.5" x2="892.9" y2="763.5" stroke="#b4b4b4" stroke-dasharray="5 4.45"/><line x1="819.0" y1="790.5" x2="892.9" y2="790.5" stroke="#b4b4b4" stroke-dasharray="5 4.45"/><polyline points="849.6,-55.6 857.1,23.7 857.1,103.0 849.6,182.3 871.9,340.8 883.1,499.4 873.8,658.0 857.1,737.3" fill="none" stroke="#0000ff" stroke-width="1.1"/></g><line x1="818.0" y1="261.5" x2="821.0" y2="261.5" stroke="#000"/><line x1="818.0" y1="287.5" x2="821.0" y2="287.5" stroke="#000"/><line x1="818.0" y1="314.5" x2="821.0" y2="314.5" stroke="#000"/><line x1="818.0" y1="340.5" x2="821.0" y2="340.5" stroke="#000"/><line x1="818.0" y1="367.5" x2="821.0" y2="367.5" stroke="#000"/><line x1="818.0" y1="393.5" x2="821.0" y2="393.5" stroke="#000"/><line x1="818.0" y1="420.5" x2="821.0" y2="420.5" stroke="#000"/><line x1="818.0" y1="446.5" x2="821.0" y2="446.5" stroke="#000"/><line x1="818.0" y1="472.5" x2="821.0" y2="472.5" stroke="#000"/><line x1="818.0" y1="499.5" x2="821.0" y2="499.5" stroke="#000"/><line x1="818.0" y1="525.5" x2="821.0" y2="525.5" stroke="#000"/><line x1="818.0" y1="552.5" x2="821.0" y2="552.5" stroke="#000"/><line x1="818.0" y1="578.5" x2="821.0" y2="578.5" stroke="#000"/><line x1="818.0" y1="605.5" x2="821.0" y2="605.5" stroke="#000"/><line x1="818.0" y1="631.5" x2="821.0" y2="631.5" stroke="#000"/><line x1="818.0" y1="658.5" x2="821.0" y2="658.5" stroke="#000"/><line x1="818.0" y1="684.5" x2="821.0" y2="684.5" stroke="#000"/><line x1="818.0" y1="710.5" x2="821.0" y2="710.5" stroke="#000"/><line x1="818.0" y1="737.5" x2="821.0" y2="737.5" stroke="#000"/><line x1="818.0" y1="763.5" x2="821.0" y2="763.5" stroke="#000"/><line x1="818.0" y1="790.5" x2="821.0" y2="790.5" stroke="#000"/><line x1="818.5" y1="238.0" x2="818.5" y2="816.6" stroke="#000"/><line x1="790.0" y1="301.5" x2="818.0" y2="301.5" stroke="#000"/><line x1="790.0" y1="380.5" x2="818.0" y2="380.5" stroke="#000"/><line x1="790.0" y1="459.5" x2="818.0" y2="459.5" stroke="#000"/><line x1="790.0" y1="538.5" x2="818.0" y2="538.5" stroke="#000"/><line x1="790.0" y1="618.5" x2="818.0" y2="618.5" stroke="#000"/><line x1="790.0" y1="697.5" x2="818.0" y2="697.5" stroke="#000"/><line x1="790.0" y1="776.5" x2="818.0" y2="776.5" stroke="#000"/><path d="M868.3 340.8 H875.5 M871.9 337.2 V344.4" stroke="#0000ff" stroke-width="1.8" fill="none"/><text x="873.7" y="337.8" letter-spacing="0.7">29</text><text x="799.3" y="328.0" text-anchor="middle" letter-spacing="0.5">4</text><text x="808.3" y="338.2" text-anchor="middle" letter-spacing="0.5">15</text><text x="799.3" y="349.2" text-anchor="middle" letter-spacing="0.5">14</text><text x="808.3" y="359.4" text-anchor="middle" letter-spacing="0.5">15</text><path d="M879.5 499.4 H886.7 M883.1 495.8 V503.0" stroke="#0000ff" stroke-width="1.8" fill="none"/><text x="884.9" y="496.9" font-weight="bold" letter-spacing="0.7">35</text><text x="799.3" y="492.0" text-anchor="middle" letter-spacing="0.5">14</text><text x="808.3" y="502.2" text-anchor="middle" letter-spacing="0.5">17</text><text x="799.3" y="512.6" text-anchor="middle" letter-spacing="0.5">18</text><path d="M870.2 658.0 H877.4 M873.8 654.4 V661.6" stroke="#0000ff" stroke-width="1.8" fill="none"/><text x="875.9" y="654.5" letter-spacing="0.7">30</text><text x="799.3" y="650.6" text-anchor="middle" letter-spacing="0.5">14</text><text x="808.3" y="660.8" text-anchor="middle" letter-spacing="0.5">14</text><text x="799.3" y="671.2" text-anchor="middle" letter-spacing="0.5">16</text><path d="M853.5 737.3 H860.7 M857.1 733.7 V740.9" stroke="#0000ff" stroke-width="1.8" fill="none"/><text x="852.6" y="734.0" text-anchor="end" letter-spacing="0.7">21</text><text x="799.3" y="729.9" text-anchor="middle" letter-spacing="0.5">14</text><text x="808.3" y="740.1" text-anchor="middle" letter-spacing="0.5">14</text><text x="799.3" y="750.5" text-anchor="middle" letter-spacing="0.5">7</text><line x1="788.0" y1="816.5" x2="893.0" y2="816.5" stroke="#000"/><line x1="818.5" y1="813.0" x2="818.5" y2="816.6" stroke="#000"/><text x="817.4" y="827.9" text-anchor="middle" letter-spacing="0.6">0</text><line x1="836.5" y1="813.0" x2="836.5" y2="816.6" stroke="#000"/><text x="836.0" y="827.9" text-anchor="middle" letter-spacing="0.6">10</text><line x1="855.5" y1="813.0" x2="855.5" y2="816.6" stroke="#000"/><text x="854.6" y="827.9" text-anchor="middle" letter-spacing="0.6">20</text><line x1="873.5" y1="813.0" x2="873.5" y2="816.6" stroke="#000"/><text x="873.2" y="827.9" text-anchor="middle" letter-spacing="0.6">30</text><line x1="892.5" y1="813.0" x2="892.5" y2="816.6" stroke="#000"/><text x="891.8" y="827.9" text-anchor="middle" letter-spacing="0.6">40</text><text x="854.8" y="840.0" text-anchor="middle" letter-spacing="0.65">[n / 0,30m]</text><rect x="904.0" y="238.0" width="55.0" height="314.3" fill="#00ff00" stroke="none"/><clipPath id="cp3"><rect x="904.0" y="238.0" width="55.0" height="314.3"/></clipPath><g clip-path="url(#cp3)"><line x1="913.5" y1="236.0" x2="913.5" y2="554.3" stroke="#000"/><line x1="931.5" y1="236.0" x2="931.5" y2="554.3" stroke="#000"/><line x1="949.5" y1="236.0" x2="949.5" y2="554.3" stroke="#000"/><line x1="926.8" y1="191.5" x2="936.8" y2="191.5" stroke="#000"/><line x1="908.8" y1="202.5" x2="918.8" y2="202.5" stroke="#000"/><line x1="944.8" y1="202.5" x2="953.8" y2="202.5" stroke="#000"/><line x1="926.8" y1="214.5" x2="936.8" y2="214.5" stroke="#000"/><line x1="908.8" y1="226.5" x2="918.8" y2="226.5" stroke="#000"/><line x1="944.8" y1="226.5" x2="953.8" y2="226.5" stroke="#000"/><line x1="926.8" y1="238.5" x2="936.8" y2="238.5" stroke="#000"/><line x1="908.8" y1="249.5" x2="918.8" y2="249.5" stroke="#000"/><line x1="944.8" y1="249.5" x2="953.8" y2="249.5" stroke="#000"/><line x1="926.8" y1="262.5" x2="936.8" y2="262.5" stroke="#000"/><line x1="908.8" y1="273.5" x2="918.8" y2="273.5" stroke="#000"/><line x1="944.8" y1="273.5" x2="953.8" y2="273.5" stroke="#000"/><line x1="926.8" y1="285.5" x2="936.8" y2="285.5" stroke="#000"/><line x1="908.8" y1="297.5" x2="918.8" y2="297.5" stroke="#000"/><line x1="944.8" y1="297.5" x2="953.8" y2="297.5" stroke="#000"/><line x1="926.8" y1="309.5" x2="936.8" y2="309.5" stroke="#000"/><line x1="908.8" y1="320.5" x2="918.8" y2="320.5" stroke="#000"/><line x1="944.8" y1="320.5" x2="953.8" y2="320.5" stroke="#000"/><line x1="926.8" y1="333.5" x2="936.8" y2="333.5" stroke="#000"/><line x1="908.8" y1="344.5" x2="918.8" y2="344.5" stroke="#000"/><line x1="944.8" y1="344.5" x2="953.8" y2="344.5" stroke="#000"/><line x1="926.8" y1="357.5" x2="936.8" y2="357.5" stroke="#000"/><line x1="908.8" y1="368.5" x2="918.8" y2="368.5" stroke="#000"/><line x1="944.8" y1="368.5" x2="953.8" y2="368.5" stroke="#000"/><line x1="926.8" y1="380.5" x2="936.8" y2="380.5" stroke="#000"/><line x1="908.8" y1="392.5" x2="918.8" y2="392.5" stroke="#000"/><line x1="944.8" y1="392.5" x2="953.8" y2="392.5" stroke="#000"/><line x1="926.8" y1="404.5" x2="936.8" y2="404.5" stroke="#000"/><line x1="908.8" y1="415.5" x2="918.8" y2="415.5" stroke="#000"/><line x1="944.8" y1="415.5" x2="953.8" y2="415.5" stroke="#000"/><line x1="926.8" y1="428.5" x2="936.8" y2="428.5" stroke="#000"/><line x1="908.8" y1="439.5" x2="918.8" y2="439.5" stroke="#000"/><line x1="944.8" y1="439.5" x2="953.8" y2="439.5" stroke="#000"/><line x1="926.8" y1="451.5" x2="936.8" y2="451.5" stroke="#000"/><line x1="908.8" y1="463.5" x2="918.8" y2="463.5" stroke="#000"/><line x1="944.8" y1="463.5" x2="953.8" y2="463.5" stroke="#000"/><line x1="926.8" y1="475.5" x2="936.8" y2="475.5" stroke="#000"/><line x1="908.8" y1="486.5" x2="918.8" y2="486.5" stroke="#000"/><line x1="944.8" y1="486.5" x2="953.8" y2="486.5" stroke="#000"/><line x1="926.8" y1="499.5" x2="936.8" y2="499.5" stroke="#000"/><line x1="908.8" y1="510.5" x2="918.8" y2="510.5" stroke="#000"/><line x1="944.8" y1="510.5" x2="953.8" y2="510.5" stroke="#000"/><line x1="926.8" y1="522.5" x2="936.8" y2="522.5" stroke="#000"/><line x1="908.8" y1="534.5" x2="918.8" y2="534.5" stroke="#000"/><line x1="944.8" y1="534.5" x2="953.8" y2="534.5" stroke="#000"/><line x1="926.8" y1="546.5" x2="936.8" y2="546.5" stroke="#000"/><line x1="908.8" y1="557.5" x2="918.8" y2="557.5" stroke="#000"/><line x1="944.8" y1="557.5" x2="953.8" y2="557.5" stroke="#000"/><line x1="926.8" y1="570.5" x2="936.8" y2="570.5" stroke="#000"/><line x1="908.8" y1="581.5" x2="918.8" y2="581.5" stroke="#000"/><line x1="944.8" y1="581.5" x2="953.8" y2="581.5" stroke="#000"/></g><rect x="904.0" y="552.3" width="55.0" height="262.7" fill="#00ff00" stroke="none"/><line x1="923.0" y1="558.5" x2="941.0" y2="558.5" stroke="#000"/><line x1="903.4" y1="569.5" x2="909.0" y2="569.5" stroke="#000"/><line x1="920.0" y1="569.5" x2="932.0" y2="569.5" stroke="#000"/><line x1="943.0" y1="569.5" x2="956.0" y2="569.5" stroke="#000"/><line x1="908.0" y1="581.5" x2="920.0" y2="581.5" stroke="#000"/><line x1="937.0" y1="581.5" x2="950.0" y2="581.5" stroke="#000"/><line x1="910.0" y1="593.5" x2="929.0" y2="593.5" stroke="#000"/><line x1="949.0" y1="593.5" x2="959.0" y2="593.5" stroke="#000"/><line x1="907.0" y1="605.5" x2="920.0" y2="605.5" stroke="#000"/><line x1="931.0" y1="605.5" x2="944.0" y2="605.5" stroke="#000"/><line x1="955.0" y1="605.5" x2="959.0" y2="605.5" stroke="#000"/><line x1="903.4" y1="617.5" x2="909.0" y2="617.5" stroke="#000"/><line x1="926.0" y1="617.5" x2="938.0" y2="617.5" stroke="#000"/><line x1="955.0" y1="617.5" x2="959.0" y2="617.5" stroke="#000"/><line x1="903.4" y1="629.5" x2="917.0" y2="629.5" stroke="#000"/><line x1="937.0" y1="629.5" x2="956.0" y2="629.5" stroke="#000"/><line x1="903.4" y1="640.5" x2="909.0" y2="640.5" stroke="#000"/><line x1="920.0" y1="640.5" x2="932.0" y2="640.5" stroke="#000"/><line x1="943.0" y1="640.5" x2="956.0" y2="640.5" stroke="#000"/><line x1="914.0" y1="652.5" x2="926.0" y2="652.5" stroke="#000"/><line x1="943.0" y1="652.5" x2="956.0" y2="652.5" stroke="#000"/><line x1="903.4" y1="664.5" x2="906.0" y2="664.5" stroke="#000"/><line x1="926.0" y1="664.5" x2="944.0" y2="664.5" stroke="#000"/><line x1="908.0" y1="676.5" x2="920.0" y2="676.5" stroke="#000"/><line x1="931.0" y1="676.5" x2="944.0" y2="676.5" stroke="#000"/><line x1="955.0" y1="676.5" x2="959.0" y2="676.5" stroke="#000"/><line x1="903.4" y1="688.5" x2="914.0" y2="688.5" stroke="#000"/><line x1="931.0" y1="688.5" x2="944.0" y2="688.5" stroke="#000"/><line x1="914.0" y1="700.5" x2="932.0" y2="700.5" stroke="#000"/><line x1="952.0" y1="700.5" x2="959.0" y2="700.5" stroke="#000"/><line x1="903.4" y1="712.5" x2="909.0" y2="712.5" stroke="#000"/><line x1="920.0" y1="712.5" x2="932.0" y2="712.5" stroke="#000"/><line x1="943.0" y1="712.5" x2="956.0" y2="712.5" stroke="#000"/><line x1="920.0" y1="724.5" x2="932.0" y2="724.5" stroke="#000"/><line x1="949.0" y1="724.5" x2="959.0" y2="724.5" stroke="#000"/><line x1="903.4" y1="735.5" x2="920.0" y2="735.5" stroke="#000"/><line x1="940.0" y1="735.5" x2="959.0" y2="735.5" stroke="#000"/><line x1="908.0" y1="747.5" x2="920.0" y2="747.5" stroke="#000"/><line x1="931.0" y1="747.5" x2="944.0" y2="747.5" stroke="#000"/><line x1="955.0" y1="747.5" x2="959.0" y2="747.5" stroke="#000"/><line x1="908.0" y1="759.5" x2="920.0" y2="759.5" stroke="#000"/><line x1="937.0" y1="759.5" x2="950.0" y2="759.5" stroke="#000"/><line x1="903.4" y1="771.5" x2="909.0" y2="771.5" stroke="#000"/><line x1="928.0" y1="771.5" x2="947.0" y2="771.5" stroke="#000"/><line x1="903.4" y1="783.5" x2="909.0" y2="783.5" stroke="#000"/><line x1="920.0" y1="783.5" x2="932.0" y2="783.5" stroke="#000"/><line x1="943.0" y1="783.5" x2="956.0" y2="783.5" stroke="#000"/><line x1="903.4" y1="795.5" x2="909.0" y2="795.5" stroke="#000"/><line x1="926.0" y1="795.5" x2="938.0" y2="795.5" stroke="#000"/><line x1="955.0" y1="795.5" x2="959.0" y2="795.5" stroke="#000"/><line x1="917.0" y1="806.5" x2="935.0" y2="806.5" stroke="#000"/><line x1="955.0" y1="806.5" x2="959.0" y2="806.5" stroke="#000"/><line x1="904.5" y1="238.0" x2="904.5" y2="816.6" stroke="#000"/><line x1="904.0" y1="551.5" x2="959.8" y2="551.5" stroke="#fff"/><line x1="903.8" y1="552.5" x2="959.8" y2="552.5" stroke="#000"/><line x1="903.8" y1="816.5" x2="959.8" y2="816.5" stroke="#000"/><rect x="908.5" y="393.0" width="46.0" height="7.0" fill="#00ff00" fill-opacity="1.0"/><line x1="931.5" y1="388.0" x2="931.5" y2="403.0" stroke="#000"/><text x="931.5" y="398.6" text-anchor="middle" fill="rgba(0,0,0,0.82)" letter-spacing="0.5">Clayey Silt</text><rect x="910.5" y="681.0" width="40.0" height="7.0" fill="#00ff00" fill-opacity="0.0"/><text x="930.5" y="686.6" text-anchor="middle" fill="rgba(0,0,0,0.82)" letter-spacing="0.5">Silty clay</text><path d="M961.0 245.7 H973.0 V247.2" fill="none" stroke="#0000ff" stroke-width="1.1"/><path d="M969.6 251.9 L972.9 246.3 L976.2 251.9 Z" fill="#0000ff" stroke="#0000ff" stroke-width="0.6"/><text x="980.8" y="249.1" fill="#3838ff" letter-spacing="0.6">7,20</text><line x1="961.0" y1="446.5" x2="966.0" y2="446.5" stroke="#800000"/><rect x="966.0" y="443.2" width="13.0" height="6.8" fill="#800000" stroke="none"/><path d="M967.1 444.3 H976.4 L967.1 448.9 Z" fill="#fff"/><text x="980.8" y="449.4" fill="#8a2020" letter-spacing="0.7">SD 02</text><path d="M960.6 610.4 H971.6 M968.6 604.6 H975.6 L972.0 610.2 Z" fill="none" stroke="#0000ff" stroke-width="1"/><text x="980.4" y="613.0" fill="#3838ff" letter-spacing="0.6">14,10</text><line x1="960.4" y1="710.5" x2="964.0" y2="710.5" stroke="#800000"/><line x1="960.4" y1="763.5" x2="964.0" y2="763.5" stroke="#800000"/><line x1="963.5" y1="710.9" x2="963.5" y2="764.1" stroke="#800000"/><line x1="964.0" y1="737.5" x2="966.4" y2="737.5" stroke="#800000"/><rect x="966.5" y="734.4" width="12.0" height="5.8" fill="#fff" stroke="#800000" stroke-width="1.1"/><path d="M967.0 734.9 L971.6 739.7 M967.0 739.7 L971.6 734.9 M978.0 734.9 L973.4 739.7 M978.0 739.7 L973.4 734.9" fill="none" stroke="#800000" stroke-width="0.8"/><rect x="971.0" y="738.4" width="3.0" height="1.2" fill="#800000" stroke="none"/><text x="981.0" y="739.7" fill="#8a2020" letter-spacing="0.6">SUD 01</text><line x1="1017.5" y1="238.0" x2="1017.5" y2="816.6" stroke="#000"/><line x1="1017.5" y1="552.5" x2="1073.0" y2="552.5" stroke="#000"/><line x1="1017.5" y1="816.5" x2="1073.0" y2="816.5" stroke="#000"/><text x="1044.8" y="399.2" text-anchor="middle" letter-spacing="0.55">6,00 - 13,00</text><text x="1044.8" y="682.0" text-anchor="middle" letter-spacing="0.55">13,00 -</text><text x="1044.8" y="692.2" text-anchor="middle" letter-spacing="0.55">18,00</text><text x="1110.7" y="264.3" text-anchor="end" letter-spacing="0.5">7,50</text><line x1="1113.2" y1="261.5" x2="1115.4" y2="261.5" stroke="#000"/><text x="1110.7" y="290.8" text-anchor="end" letter-spacing="0.5">8,00</text><line x1="1113.2" y1="287.5" x2="1115.4" y2="287.5" stroke="#000"/><text x="1110.7" y="317.2" text-anchor="end" letter-spacing="0.5">8,50</text><line x1="1113.2" y1="314.5" x2="1115.4" y2="314.5" stroke="#000"/><text x="1110.7" y="343.6" text-anchor="end" letter-spacing="0.5">9,00</text><line x1="1113.2" y1="340.5" x2="1115.4" y2="340.5" stroke="#000"/><text x="1110.7" y="370.1" text-anchor="end" letter-spacing="0.5">9,50</text><line x1="1113.2" y1="367.5" x2="1115.4" y2="367.5" stroke="#000"/><text x="1110.7" y="396.5" text-anchor="end" letter-spacing="0.5">10,00</text><line x1="1113.2" y1="393.5" x2="1115.4" y2="393.5" stroke="#000"/><text x="1110.7" y="422.9" text-anchor="end" letter-spacing="0.5">10,50</text><line x1="1113.2" y1="420.5" x2="1115.4" y2="420.5" stroke="#000"/><text x="1110.7" y="449.4" text-anchor="end" letter-spacing="0.5">11,00</text><line x1="1113.2" y1="446.5" x2="1115.4" y2="446.5" stroke="#000"/><text x="1110.7" y="475.8" text-anchor="end" letter-spacing="0.5">11,50</text><line x1="1113.2" y1="472.5" x2="1115.4" y2="472.5" stroke="#000"/><text x="1110.7" y="502.2" text-anchor="end" letter-spacing="0.5">12,00</text><line x1="1113.2" y1="499.5" x2="1115.4" y2="499.5" stroke="#000"/><text x="1110.7" y="528.6" text-anchor="end" letter-spacing="0.5">12,50</text><line x1="1113.2" y1="525.5" x2="1115.4" y2="525.5" stroke="#000"/><text x="1110.7" y="555.1" text-anchor="end" letter-spacing="0.5">13,00</text><line x1="1113.2" y1="552.5" x2="1115.4" y2="552.5" stroke="#000"/><text x="1110.7" y="581.5" text-anchor="end" letter-spacing="0.5">13,50</text><line x1="1113.2" y1="578.5" x2="1115.4" y2="578.5" stroke="#000"/><text x="1110.7" y="607.9" text-anchor="end" letter-spacing="0.5">14,00</text><line x1="1113.2" y1="605.5" x2="1115.4" y2="605.5" stroke="#000"/><text x="1110.7" y="634.4" text-anchor="end" letter-spacing="0.5">14,50</text><line x1="1113.2" y1="631.5" x2="1115.4" y2="631.5" stroke="#000"/><text x="1110.7" y="660.8" text-anchor="end" letter-spacing="0.5">15,00</text><line x1="1113.2" y1="658.5" x2="1115.4" y2="658.5" stroke="#000"/><text x="1110.7" y="687.2" text-anchor="end" letter-spacing="0.5">15,50</text><line x1="1113.2" y1="684.5" x2="1115.4" y2="684.5" stroke="#000"/><text x="1110.7" y="713.7" text-anchor="end" letter-spacing="0.5">16,00</text><line x1="1113.2" y1="710.5" x2="1115.4" y2="710.5" stroke="#000"/><text x="1110.7" y="740.1" text-anchor="end" letter-spacing="0.5">16,50</text><line x1="1113.2" y1="737.5" x2="1115.4" y2="737.5" stroke="#000"/><text x="1110.7" y="766.5" text-anchor="end" letter-spacing="0.5">17,00</text><line x1="1113.2" y1="763.5" x2="1115.4" y2="763.5" stroke="#000"/><text x="1110.7" y="792.9" text-anchor="end" letter-spacing="0.5">17,50</text><line x1="1113.2" y1="790.5" x2="1115.4" y2="790.5" stroke="#000"/><text x="1110.7" y="819.4" text-anchor="end" letter-spacing="0.5">18,00</text><line x1="1113.2" y1="816.5" x2="1115.4" y2="816.5" stroke="#000"/><rect x="1115.4" y="238.0" width="56.6" height="578.0" fill="#ffff00" stroke="none"/><clipPath id="cp4"><rect x="1114.4" y="238.0" width="57.6" height="578.0"/></clipPath><g clip-path="url(#cp4)"><line x1="1127.5" y1="236.0" x2="1127.5" y2="818.0" stroke="#000"/><line x1="1145.5" y1="236.0" x2="1145.5" y2="818.0" stroke="#000"/><line x1="1162.5" y1="236.0" x2="1162.5" y2="818.0" stroke="#000"/><line x1="1130.0" y1="184.5" x2="1139.8" y2="184.5" stroke="#000"/><line x1="1166.0" y1="184.5" x2="1173.0" y2="184.5" stroke="#000"/><line x1="1114.4" y1="199.5" x2="1121.8" y2="199.5" stroke="#000"/><line x1="1148.0" y1="199.5" x2="1156.8" y2="199.5" stroke="#000"/><line x1="1130.0" y1="213.5" x2="1139.8" y2="213.5" stroke="#000"/><line x1="1166.0" y1="213.5" x2="1173.0" y2="213.5" stroke="#000"/><line x1="1114.4" y1="228.5" x2="1121.8" y2="228.5" stroke="#000"/><line x1="1148.0" y1="228.5" x2="1156.8" y2="228.5" stroke="#000"/><line x1="1130.0" y1="243.5" x2="1139.8" y2="243.5" stroke="#000"/><line x1="1166.0" y1="243.5" x2="1173.0" y2="243.5" stroke="#000"/><line x1="1114.4" y1="258.5" x2="1121.8" y2="258.5" stroke="#000"/><line x1="1148.0" y1="258.5" x2="1156.8" y2="258.5" stroke="#000"/><line x1="1130.0" y1="273.5" x2="1139.8" y2="273.5" stroke="#000"/><line x1="1166.0" y1="273.5" x2="1173.0" y2="273.5" stroke="#000"/><line x1="1114.4" y1="287.5" x2="1121.8" y2="287.5" stroke="#000"/><line x1="1148.0" y1="287.5" x2="1156.8" y2="287.5" stroke="#000"/><line x1="1130.0" y1="302.5" x2="1139.8" y2="302.5" stroke="#000"/><line x1="1166.0" y1="302.5" x2="1173.0" y2="302.5" stroke="#000"/><line x1="1114.4" y1="317.5" x2="1121.8" y2="317.5" stroke="#000"/><line x1="1148.0" y1="317.5" x2="1156.8" y2="317.5" stroke="#000"/><line x1="1130.0" y1="332.5" x2="1139.8" y2="332.5" stroke="#000"/><line x1="1166.0" y1="332.5" x2="1173.0" y2="332.5" stroke="#000"/><line x1="1114.4" y1="347.5" x2="1121.8" y2="347.5" stroke="#000"/><line x1="1148.0" y1="347.5" x2="1156.8" y2="347.5" stroke="#000"/><line x1="1130.0" y1="362.5" x2="1139.8" y2="362.5" stroke="#000"/><line x1="1166.0" y1="362.5" x2="1173.0" y2="362.5" stroke="#000"/><line x1="1114.4" y1="376.5" x2="1121.8" y2="376.5" stroke="#000"/><line x1="1148.0" y1="376.5" x2="1156.8" y2="376.5" stroke="#000"/><line x1="1130.0" y1="391.5" x2="1139.8" y2="391.5" stroke="#000"/><line x1="1166.0" y1="391.5" x2="1173.0" y2="391.5" stroke="#000"/><line x1="1114.4" y1="406.5" x2="1121.8" y2="406.5" stroke="#000"/><line x1="1148.0" y1="406.5" x2="1156.8" y2="406.5" stroke="#000"/><line x1="1130.0" y1="421.5" x2="1139.8" y2="421.5" stroke="#000"/><line x1="1166.0" y1="421.5" x2="1173.0" y2="421.5" stroke="#000"/><line x1="1114.4" y1="436.5" x2="1121.8" y2="436.5" stroke="#000"/><line x1="1148.0" y1="436.5" x2="1156.8" y2="436.5" stroke="#000"/><line x1="1130.0" y1="451.5" x2="1139.8" y2="451.5" stroke="#000"/><line x1="1166.0" y1="451.5" x2="1173.0" y2="451.5" stroke="#000"/><line x1="1114.4" y1="465.5" x2="1121.8" y2="465.5" stroke="#000"/><line x1="1148.0" y1="465.5" x2="1156.8" y2="465.5" stroke="#000"/><line x1="1130.0" y1="480.5" x2="1139.8" y2="480.5" stroke="#000"/><line x1="1166.0" y1="480.5" x2="1173.0" y2="480.5" stroke="#000"/><line x1="1114.4" y1="495.5" x2="1121.8" y2="495.5" stroke="#000"/><line x1="1148.0" y1="495.5" x2="1156.8" y2="495.5" stroke="#000"/><line x1="1130.0" y1="510.5" x2="1139.8" y2="510.5" stroke="#000"/><line x1="1166.0" y1="510.5" x2="1173.0" y2="510.5" stroke="#000"/><line x1="1114.4" y1="525.5" x2="1121.8" y2="525.5" stroke="#000"/><line x1="1148.0" y1="525.5" x2="1156.8" y2="525.5" stroke="#000"/><line x1="1130.0" y1="540.5" x2="1139.8" y2="540.5" stroke="#000"/><line x1="1166.0" y1="540.5" x2="1173.0" y2="540.5" stroke="#000"/><line x1="1114.4" y1="554.5" x2="1121.8" y2="554.5" stroke="#000"/><line x1="1148.0" y1="554.5" x2="1156.8" y2="554.5" stroke="#000"/><line x1="1130.0" y1="569.5" x2="1139.8" y2="569.5" stroke="#000"/><line x1="1166.0" y1="569.5" x2="1173.0" y2="569.5" stroke="#000"/><line x1="1114.4" y1="584.5" x2="1121.8" y2="584.5" stroke="#000"/><line x1="1148.0" y1="584.5" x2="1156.8" y2="584.5" stroke="#000"/><line x1="1130.0" y1="599.5" x2="1139.8" y2="599.5" stroke="#000"/><line x1="1166.0" y1="599.5" x2="1173.0" y2="599.5" stroke="#000"/><line x1="1114.4" y1="614.5" x2="1121.8" y2="614.5" stroke="#000"/><line x1="1148.0" y1="614.5" x2="1156.8" y2="614.5" stroke="#000"/><line x1="1130.0" y1="628.5" x2="1139.8" y2="628.5" stroke="#000"/><line x1="1166.0" y1="628.5" x2="1173.0" y2="628.5" stroke="#000"/><line x1="1114.4" y1="643.5" x2="1121.8" y2="643.5" stroke="#000"/><line x1="1148.0" y1="643.5" x2="1156.8" y2="643.5" stroke="#000"/><line x1="1130.0" y1="658.5" x2="1139.8" y2="658.5" stroke="#000"/><line x1="1166.0" y1="658.5" x2="1173.0" y2="658.5" stroke="#000"/><line x1="1114.4" y1="673.5" x2="1121.8" y2="673.5" stroke="#000"/><line x1="1148.0" y1="673.5" x2="1156.8" y2="673.5" stroke="#000"/><line x1="1130.0" y1="688.5" x2="1139.8" y2="688.5" stroke="#000"/><line x1="1166.0" y1="688.5" x2="1173.0" y2="688.5" stroke="#000"/><line x1="1114.4" y1="703.5" x2="1121.8" y2="703.5" stroke="#000"/><line x1="1148.0" y1="703.5" x2="1156.8" y2="703.5" stroke="#000"/><line x1="1130.0" y1="717.5" x2="1139.8" y2="717.5" stroke="#000"/><line x1="1166.0" y1="717.5" x2="1173.0" y2="717.5" stroke="#000"/><line x1="1114.4" y1="732.5" x2="1121.8" y2="732.5" stroke="#000"/><line x1="1148.0" y1="732.5" x2="1156.8" y2="732.5" stroke="#000"/><line x1="1130.0" y1="747.5" x2="1139.8" y2="747.5" stroke="#000"/><line x1="1166.0" y1="747.5" x2="1173.0" y2="747.5" stroke="#000"/><line x1="1114.4" y1="762.5" x2="1121.8" y2="762.5" stroke="#000"/><line x1="1148.0" y1="762.5" x2="1156.8" y2="762.5" stroke="#000"/><line x1="1130.0" y1="777.5" x2="1139.8" y2="777.5" stroke="#000"/><line x1="1166.0" y1="777.5" x2="1173.0" y2="777.5" stroke="#000"/><line x1="1114.4" y1="792.5" x2="1121.8" y2="792.5" stroke="#000"/><line x1="1148.0" y1="792.5" x2="1156.8" y2="792.5" stroke="#000"/><line x1="1130.0" y1="806.5" x2="1139.8" y2="806.5" stroke="#000"/><line x1="1166.0" y1="806.5" x2="1173.0" y2="806.5" stroke="#000"/><line x1="1114.4" y1="821.5" x2="1121.8" y2="821.5" stroke="#000"/><line x1="1148.0" y1="821.5" x2="1156.8" y2="821.5" stroke="#000"/><line x1="1130.0" y1="836.5" x2="1139.8" y2="836.5" stroke="#000"/><line x1="1166.0" y1="836.5" x2="1173.0" y2="836.5" stroke="#000"/><line x1="1114.4" y1="851.5" x2="1121.8" y2="851.5" stroke="#000"/><line x1="1148.0" y1="851.5" x2="1156.8" y2="851.5" stroke="#000"/></g><line x1="1115.5" y1="238.0" x2="1115.5" y2="816.6" stroke="#000"/><line x1="1113.2" y1="816.5" x2="1172.8" y2="816.5" stroke="#000"/><rect x="1121.3" y="525.6" width="46.0" height="7.0" fill="#ffff00" fill-opacity="0.0"/><text x="1144.3" y="531.2" text-anchor="middle" fill="rgba(0,0,0,0.82)" letter-spacing="0.5">Clayey Silt</text><path d="M1174.0 245.7 H1186.0 V247.2" fill="none" stroke="#0000ff" stroke-width="1.1"/><path d="M1182.6 251.9 L1185.9 246.3 L1189.2 251.9 Z" fill="#0000ff" stroke="#0000ff" stroke-width="0.6"/><text x="1193.8" y="249.1" fill="#3838ff" letter-spacing="0.6">7,20</text><line x1="1174.0" y1="446.5" x2="1179.0" y2="446.5" stroke="#800000"/><rect x="1179.0" y="443.2" width="13.0" height="6.8" fill="#800000" stroke="none"/><path d="M1180.1 444.3 H1189.4 L1180.1 448.9 Z" fill="#fff"/><text x="1193.8" y="449.4" fill="#8a2020" letter-spacing="0.7">SD 02</text><path d="M1173.6 610.4 H1184.6 M1181.6 604.6 H1188.6 L1185.0 610.2 Z" fill="none" stroke="#0000ff" stroke-width="1"/><text x="1193.4" y="613.0" fill="#3838ff" letter-spacing="0.6">14,10</text><line x1="1173.4" y1="710.5" x2="1177.0" y2="710.5" stroke="#800000"/><line x1="1173.4" y1="763.5" x2="1177.0" y2="763.5" stroke="#800000"/><line x1="1176.5" y1="710.9" x2="1176.5" y2="764.1" stroke="#800000"/><line x1="1177.0" y1="737.5" x2="1179.4" y2="737.5" stroke="#800000"/><rect x="1179.5" y="734.4" width="12.0" height="5.8" fill="#fff" stroke="#800000" stroke-width="1.1"/><path d="M1180.0 734.9 L1184.6 739.7 M1180.0 739.7 L1184.6 734.9 M1191.0 734.9 L1186.4 739.7 M1191.0 739.7 L1186.4 734.9" fill="none" stroke="#800000" stroke-width="0.8"/><rect x="1184.0" y="738.4" width="3.0" height="1.2" fill="#800000" stroke="none"/><text x="1194.0" y="739.7" fill="#8a2020" letter-spacing="0.6">SUD 01</text><line x1="1229.5" y1="238.0" x2="1229.5" y2="816.6" stroke="#000"/><line x1="1229.5" y1="816.5" x2="1285.0" y2="816.5" stroke="#000"/><text x="1256.8" y="531.0" text-anchor="middle" letter-spacing="0.55">6,00 - 18,00</text><rect x="753.5" y="866.5" width="532.0" height="73.0" fill="none" stroke="#000"/><text x="756.6" y="876.7" font-weight="bold" letter-spacing="0.8">Key:</text><path d="M758.0 892.5 H767.5 M764.2 887.5 H770.2 L767.4 892.4 Z" fill="none" stroke="#0000ff" stroke-width="1"/><path d="M758.0 897.5 H767.4 V899 M764.2 903 L767.2 898 L770.2 903 Z" fill="#0000ff" stroke="#0000ff" stroke-width="1"/><text x="775.0" y="892.0" textLength="45.6" lengthAdjust="spacing">GWT bored</text><text x="775.0" y="902.0" textLength="49.2" lengthAdjust="spacing">GWT steady</text><rect x="842.9" y="886.7" width="11.6" height="5.2" fill="#fff" stroke="#800000" stroke-width="1.1"/><path d="M843.4 887.2 L848.0 891.4 M843.4 891.4 L848.0 887.2 M854.0 887.2 L849.4 891.4 M854.0 891.4 L849.4 887.2" fill="none" stroke="#800000" stroke-width="0.8"/><rect x="847.4" y="890.1" width="2.6" height="1.2" fill="#800000" stroke="none"/><line x1="840.4" y1="889.5" x2="842.4" y2="889.5" stroke="#800000"/><rect x="842.4" y="896.4" width="12.6" height="6.4" fill="#800000" stroke="none"/><path d="M843.5 897.5 H852.4 L843.5 901.7 Z" fill="#fff"/><line x1="841.0" y1="899.5" x2="842.4" y2="899.5" stroke="#800000"/><text x="858.0" y="892.0" textLength="45.2" lengthAdjust="spacing">undisturbed</text><text x="858.0" y="902.0" textLength="35.2" lengthAdjust="spacing">disturbed</text><text x="1022.0" y="876.7" font-weight="bold" letter-spacing="0.8">Notes:</text><text x="1022.0" y="890.0" textLength="106" lengthAdjust="spacing">- Cloudy and windy, 14°C</text><text x="1022.0" y="900.8" textLength="66.4" lengthAdjust="spacing">- Start time 7:00</text><text x="1022.0" y="911.0" textLength="184" lengthAdjust="spacing">- Loosing drilling fluid at 14,0m below terrain</text><text x="1022.0" y="921.6" textLength="16" lengthAdjust="spacing">- ...</text><text x="1021.0" y="952.0" text-anchor="middle" fill="#333" textLength="458" lengthAdjust="spacing" font-size="5.8">[GEO5 - Stratigraphy | version 5.2019.0.22 | hardware key 1015 / 2 | Barnabás Polák | Copyright © 2018 Fine spol. s r.o. All Rights Reserved | www.finesoftware.eu]</text>
</svg>
<div id="status"><svg width="1400" height="26" viewBox="0 1024 1400 26"><circle cx="16.9" cy="1036.9" r="1.55" fill="#00f000" stroke="#000" stroke-width="0.9"/><circle cx="15.1" cy="1041.1" r="1.55" fill="#00f000" stroke="#000" stroke-width="0.9"/><circle cx="10.9" cy="1042.9" r="1.55" fill="#00f000" stroke="#000" stroke-width="0.9"/><circle cx="6.7" cy="1041.1" r="1.55" fill="#00f000" stroke="#000" stroke-width="0.9"/><circle cx="4.9" cy="1036.9" r="1.55" fill="#00f000" stroke="#000" stroke-width="0.9"/><circle cx="6.7" cy="1032.7" r="1.55" fill="#00f000" stroke="#000" stroke-width="0.9"/><circle cx="10.9" cy="1030.9" r="1.55" fill="#00f000" stroke="#000" stroke-width="0.9"/><circle cx="15.1" cy="1032.7" r="1.55" fill="#00f000" stroke="#000" stroke-width="0.9"/><text x="23.6" y="1042.0" font-size="12" fill="#000" textLength="162.4" lengthAdjust="spacingAndGlyphs">Document matches its settings</text><line x1="280.5" y1="1026.0" x2="280.5" y2="1047.0" stroke="#d2d2d2"/><line x1="281.5" y1="1026.0" x2="281.5" y2="1047.0" stroke="#fcfcfc"/><line x1="387.5" y1="1026.0" x2="387.5" y2="1047.0" stroke="#d2d2d2"/><line x1="388.5" y1="1026.0" x2="388.5" y2="1047.0" stroke="#fcfcfc"/><line x1="547.5" y1="1026.0" x2="547.5" y2="1047.0" stroke="#d2d2d2"/><line x1="548.5" y1="1026.0" x2="548.5" y2="1047.0" stroke="#fcfcfc"/><path d="M287.5 1033.5 H297 L299.5 1036 V1042.5 H287.5 Z" fill="#fff" stroke="#111" stroke-width="1.1"/><line x1="293.5" y1="1033.5" x2="293.5" y2="1042.5" stroke="#111"/><path d="M291 1038 H297.6 M295.6 1036 l2 2 -2 2" stroke="#111" stroke-width="1.1" fill="none"/><text x="305.5" y="1042.1" font-size="12" fill="#000" textLength="40.2" lengthAdjust="spacingAndGlyphs">1 – 2 / 2</text><path d="M398 1034 H404.4 L406.6 1036.2 V1042.1 H398 Z" fill="none" stroke="#111" stroke-width="1.1"/><path d="M397 1031.5 H407 M398.6 1030 l-1.6 1.5 1.6 1.5 M405.4 1030 l1.6 1.5 -1.6 1.5" stroke="#111" stroke-width="1" fill="none"/><path d="M394.5 1033.2 V1042 M393 1034.8 l1.5 -1.6 1.5 1.6 M393 1040.4 l1.5 1.6 1.5 -1.6" stroke="#111" stroke-width="1" fill="none"/><text x="412.4" y="1042.0" font-size="12" fill="#000" textLength="96.8" lengthAdjust="spacingAndGlyphs">A4 (21,0 x 29,7 cm)</text></svg></div>
<svg class="frame" width="1400" height="1050" viewBox="0 0 1400 1050"><line x1="0.0" y1="0.5" x2="1400.0" y2="0.5" stroke="#747474"/><line x1="0.5" y1="0.0" x2="0.5" y2="1050.0" stroke="#747474"/><line x1="0.0" y1="1049.5" x2="1400.0" y2="1049.5" stroke="#747474"/><line x1="1399.5" y1="0.0" x2="1399.5" y2="107.0" stroke="#747474"/><line x1="1399.5" y1="107.0" x2="1399.5" y2="1024.0" stroke="#adadad"/><line x1="1399.5" y1="1024.0" x2="1399.5" y2="1050.0" stroke="#747474"/></svg>
</div>
</body></html>
